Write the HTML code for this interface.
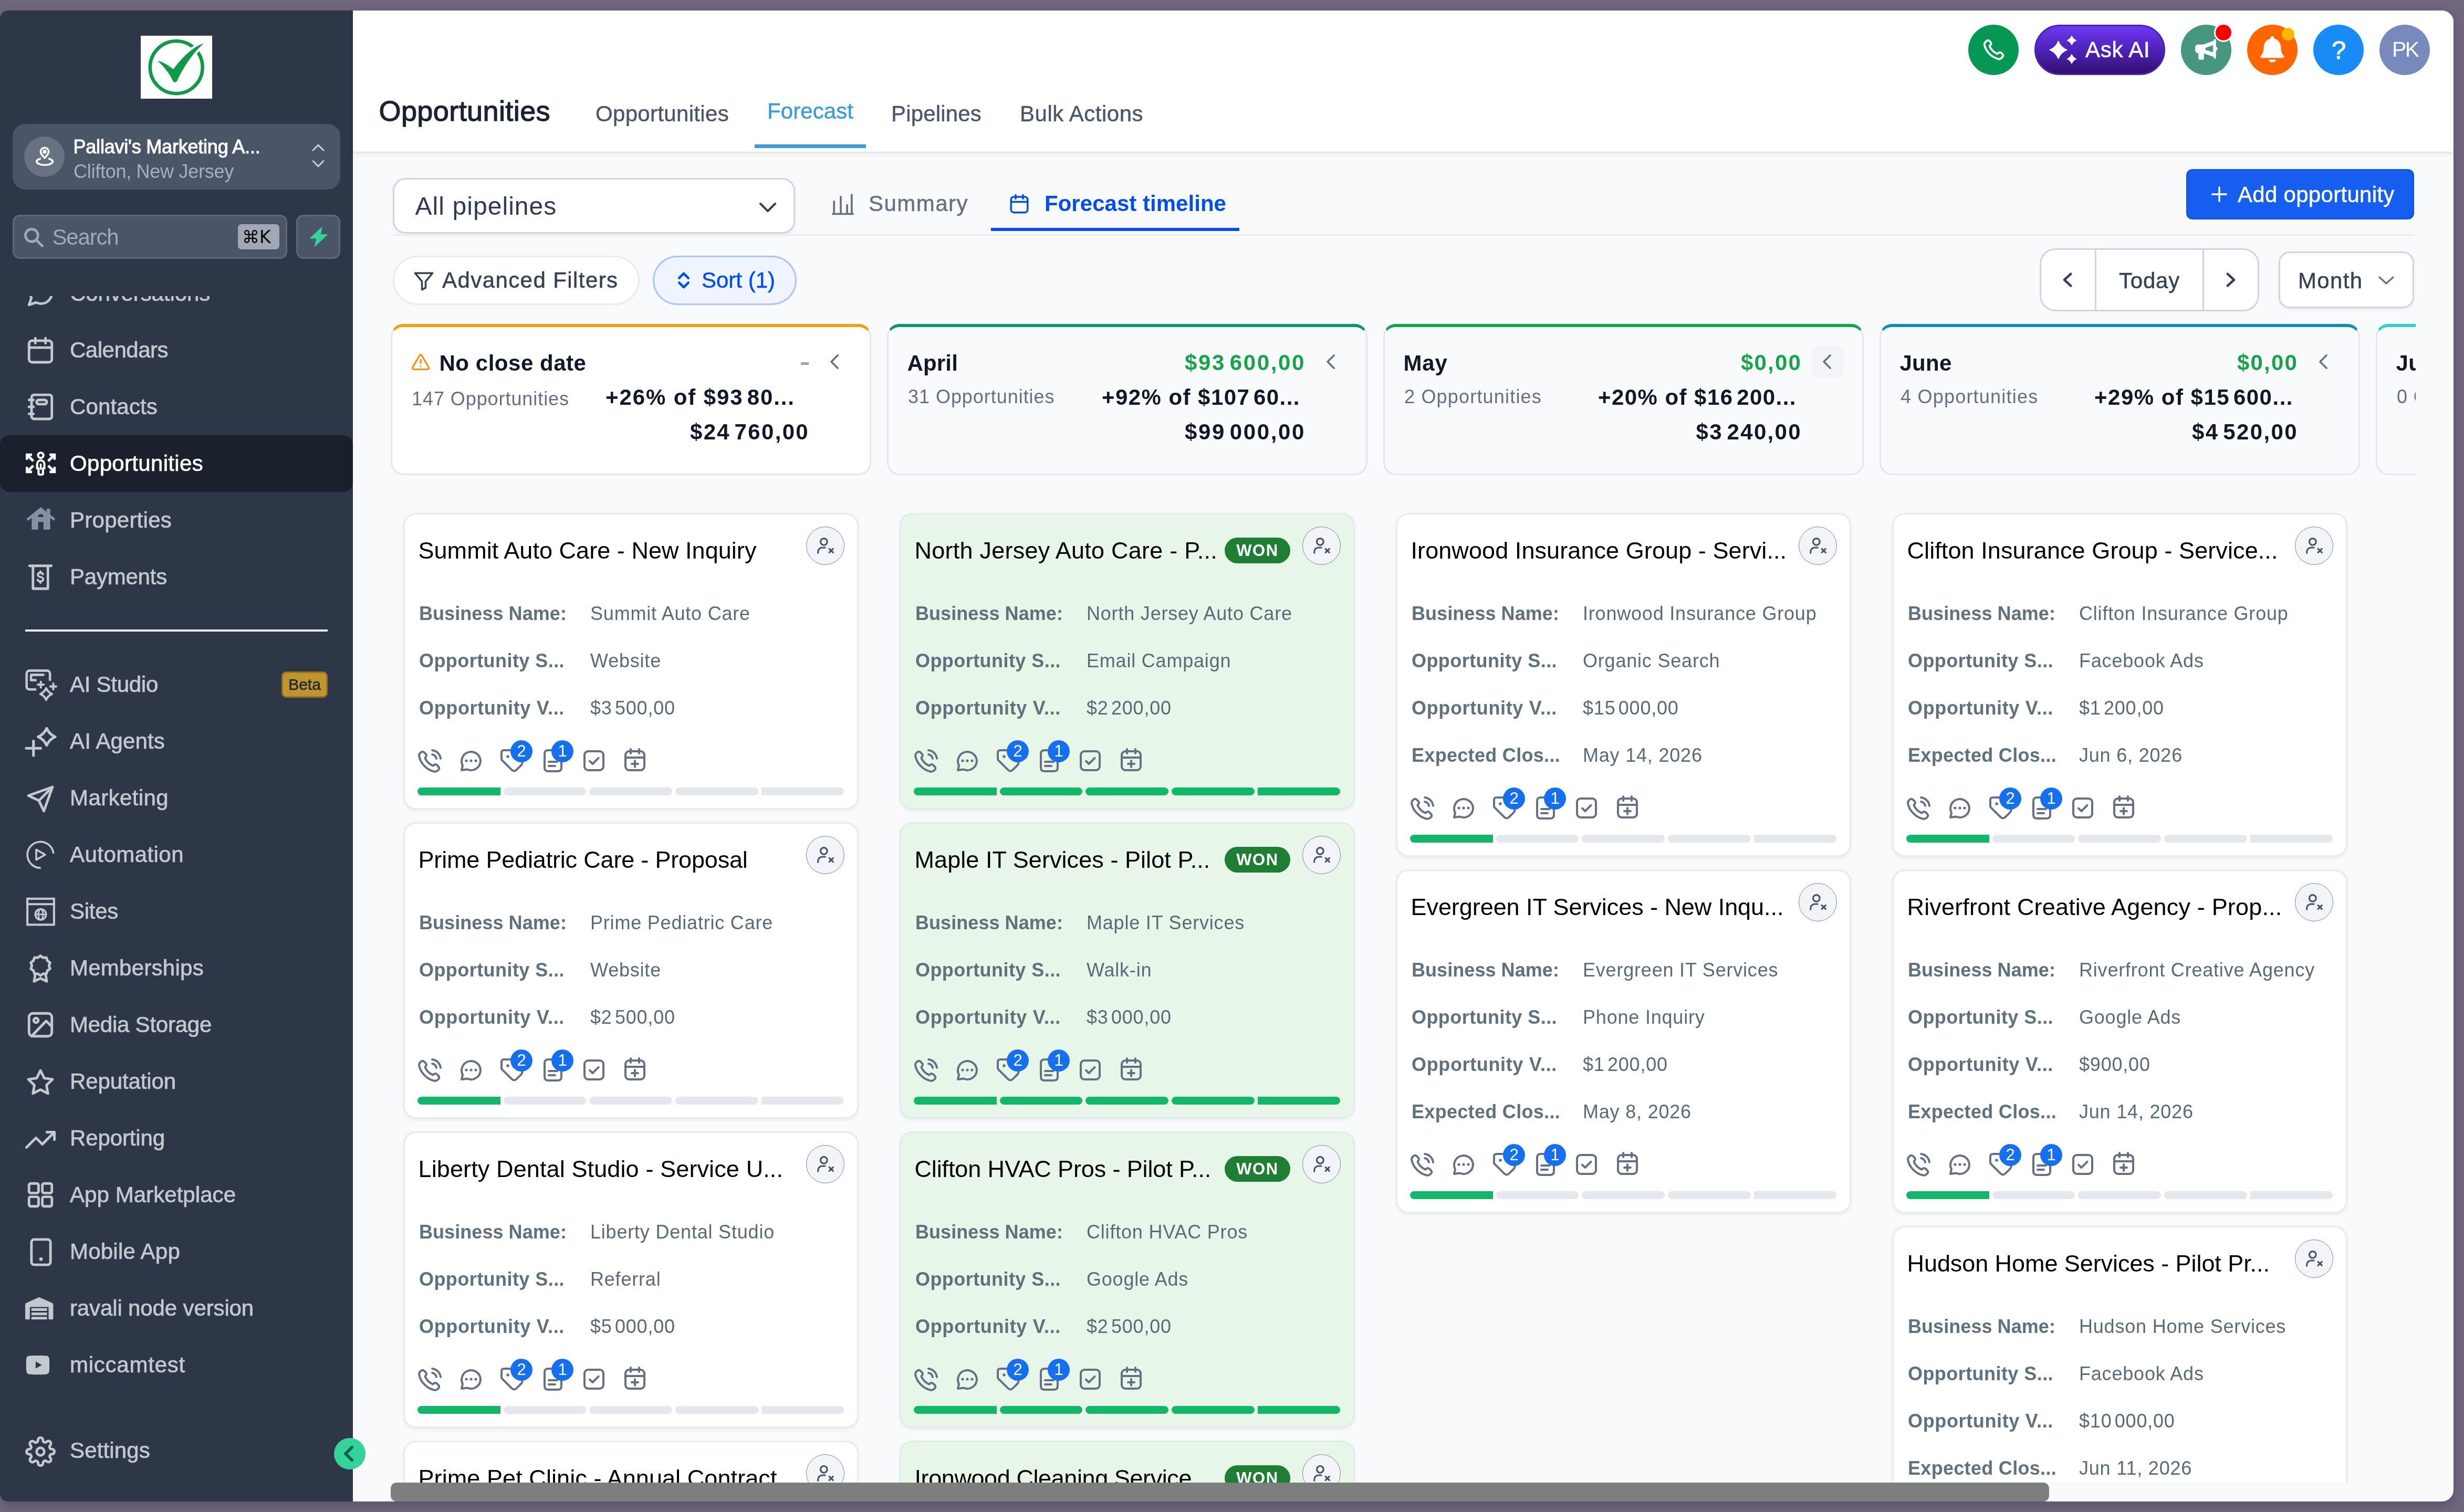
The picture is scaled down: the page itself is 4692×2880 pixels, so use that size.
<!DOCTYPE html>
<html lang="en"><head><meta charset="utf-8"><title>Opportunities - Forecast</title>
<style>
*{box-sizing:border-box;margin:0;padding:0}
html,body{width:4692px;height:2880px;overflow:hidden}
body{background:#70677d;font-family:"Liberation Sans",sans-serif;position:relative}
.win{will-change:transform;position:absolute;left:0;top:20px;width:4672px;height:2840px;overflow:hidden;border-radius:14px 22px 22px 14px;background:#f9fafb;box-shadow:0 6px 18px rgba(40,28,60,.30)}
.in{position:absolute;left:0;top:-20px;width:4672px;height:2880px}
.abs{position:absolute}
svg{display:block;width:100%;height:100%;overflow:visible}
.t{position:absolute;white-space:pre;line-height:1}
/* sidebar */
.sb{position:absolute;left:0;top:20px;width:672px;height:2840px;background:#2d3748}
.logo{position:absolute;left:268px;top:68px;width:136px;height:120px;background:#fff}
.loc{position:absolute;left:24px;top:236px;width:624px;height:125px;border-radius:24px;background:#4a5568}
.loc .av{position:absolute;left:22px;top:24px;width:77px;height:77px;border-radius:50%;background:#687283;color:#fff}
.srch{position:absolute;left:24px;top:409px;width:523px;height:84px;border-radius:14px;background:#4a5568;border:3px solid #5d6879}
.kbd{position:absolute;left:453px;top:427px;width:79px;height:48px;border-radius:7px;background:#a0a8b6}
.boltb{position:absolute;left:564px;top:409px;width:84px;height:84px;border-radius:14px;background:#4a5568;border:3px solid #5d6879}
.navclip{position:absolute;left:0;top:564px;width:672px;height:2140px;overflow:hidden}
.ni{position:absolute;left:0;width:672px;height:108px;color:#c4c8cf}
.ni.act{background:#1a202c;border-radius:18px;color:#fff}
.ni .ic{position:absolute;left:48px;top:25px;width:58px;height:58px}
.ni .ic.dim{color:#8491a3}
.ni .lb{position:absolute;left:133px;top:31px;font-size:44px;line-height:46px;white-space:pre;letter-spacing:-1.1px}
.beta{position:absolute;left:536px;width:88px;height:50px;border-radius:9px;background:#c0952f;border:3px solid #96731f;color:#1f2a3a;font-size:30px;line-height:44px;text-align:center;-webkit-text-stroke:.6px #1f2a3a}
/* header */
.hd{position:absolute;left:672px;top:20px;width:4000px;height:269px;background:#fff;box-shadow:0 3px 9px rgba(16,24,40,.10),0 1px 3px rgba(16,24,40,.06)}
.circ{position:absolute;top:47px;width:96px;height:96px;border-radius:50%;color:#fff}
.askai{position:absolute;left:3874px;top:47px;width:249px;height:96px;border-radius:48px;border:3px solid #4a22b5;background:linear-gradient(180deg,#6f37f2 0%,#5224c0 45%,#33106f 100%);color:#fff}
/* toolbar */
.sel{position:absolute;left:748px;top:339px;width:766px;height:106px;border-radius:24px;background:#fff;border:3px solid #d0d5dd;box-shadow:0 3px 6px rgba(16,24,40,.06)}
.addb{position:absolute;left:4163px;top:322px;width:434px;height:96px;border-radius:12px;background:#155eef;border:3px solid #0f55e0;color:#fff}
.pill{position:absolute;top:487px;height:94px;border-radius:47px;background:#fff;border:3px solid #eaecf0}
.grp{position:absolute;left:3884px;top:473px;width:418px;height:120px;border-radius:30px;background:#fff;border:3px solid #d0d5dd}
.mon{position:absolute;left:4339px;top:479px;width:258px;height:108px;border-radius:21px;background:#fff;border:3px solid #d0d5dd;box-shadow:0 3px 6px rgba(16,24,40,.05)}
/* board */
.board{position:absolute;left:744px;top:600px;width:3856px;height:2224px;overflow:hidden}
.col{position:absolute;top:17px;width:915px}
.ch{position:absolute;left:0;top:0;width:915px;height:288px;border-radius:24px;border:3px solid #e4e6eb;border-top-width:6px}
.ch.w{background:#fff}
.card{position:absolute;left:24px;width:867px;border-radius:24px;background:#fff;border:3px solid #e9ebef;box-shadow:0 3px 6px rgba(16,24,40,.06)}
.card.won{background:#e8f5e9;border-color:#e4ecea}
.card .ti{position:absolute;left:24px;top:60px;font-size:45px;line-height:50px;color:#000;white-space:pre}
.card .av{position:absolute;left:764px;top:23px;width:73px;height:73px;border-radius:50%;background:#f2f4f7;border:1.5px solid #7a8699;color:#475467}
.card .av svg{position:absolute;left:17px;top:16px;width:38px;height:38px}
.card .wonb{position:absolute;left:615px;top:43px;width:125px;height:49px;border-radius:25px;background:#1e7e34;color:#fff;font-size:31px;font-weight:700;line-height:50px;text-align:center;letter-spacing:1.5px}
.row{position:absolute;left:27px;height:50px;font-size:36px;line-height:50px;color:#5a6b78;white-space:pre}
.row b{position:absolute;left:0;top:0;font-weight:700;letter-spacing:-.1px}
.row span{position:absolute;left:325px;top:0;letter-spacing:.8px}
.ci{position:absolute;width:48px;height:48px;color:#667085}
.bdg{position:absolute;width:42px;height:42px;border-radius:50%;background:#1570ef;color:#fff;font-size:31px;line-height:42px;text-align:center}
.pb{position:absolute;left:23px;height:15px;width:813px}
.pb i{position:absolute;top:0;height:15px;width:157.6px;background:#e4e7ec;border-radius:8px}
.pb i.g{background:#12b76a}
.pb i:first-child{border-radius:8px 0 0 8px}
.pb i:last-child{border-radius:0 8px 8px 0}
.sbar{position:absolute;left:744px;top:2824px;width:3158px;height:36px;border-radius:11px;background:#7d7f7f}
.ns{font-size:.45em}
</style></head>
<body>
<div class="win"><div class="in">
<div class="sb"></div>
<div class="logo"><svg viewBox="0 0 136 120" style="width:136px;height:120px"><circle cx="67.7" cy="60.2" r="49.900" fill="none" stroke="#0f9a48" stroke-width="6.600"/><path d="M32.300 48.600C38 47 52 56 62.400 63.800C76 44 100 20 120 14.800C102 30 84 56 71 82C69.500 88 65 91 61.500 86.500C55 73 44 58 32.300 48.600z" fill="#0f9a48" stroke="#fff" stroke-width="9" paint-order="stroke" stroke-linejoin="round"/></svg></div>
<div class="loc"><div class="av"><div class="abs" style="left:16px;top:15px;width:46px;height:46px"><svg viewBox="0 0 24 24" fill="none" stroke="currentColor" stroke-width="1.9" stroke-linecap="round" stroke-linejoin="round"><path d="M12 13.500c2.200-2.300 4-4.100 4-6.200a4 4 0 0 0-8 0c0 2.100 1.800 3.900 4 6.200z"/><circle cx="12" cy="7.300" r="1" fill="currentColor"/><path d="M7.500 14.300C5.400 14.900 4 15.900 4 17c0 1.900 3.600 3.500 8 3.500s8-1.600 8-3.500c0-1.100-1.400-2.100-3.500-2.700"/></svg></div></div></div>
<div class="t" style="left:139.5px;top:261.5px;font-size:36px;color:#fff;font-weight:400;letter-spacing:-0.21px;-webkit-text-stroke:1px #fff">Pallavi's Marketing A...</div>
<div class="t" style="left:140px;top:308.5px;font-size:36px;color:#a7afbc;font-weight:400;letter-spacing:-0.27px;">Clifton, New Jersey</div>
<div class="abs" style="left:589px;top:265px;width:34px;height:34px;color:#cbd2dc"><svg viewBox="0 0 24 24" fill="none" stroke="currentColor" stroke-width="2" stroke-linecap="round" stroke-linejoin="round"><path d="M5 15l7-7 7 7"/></svg></div>
<div class="abs" style="left:589px;top:294px;width:34px;height:34px;color:#cbd2dc"><svg viewBox="0 0 24 24" fill="none" stroke="currentColor" stroke-width="2" stroke-linecap="round" stroke-linejoin="round"><path d="M5 9l7 7 7-7"/></svg></div>
<div class="srch"></div>
<div class="abs" style="left:42px;top:430px;width:44px;height:44px;color:#a0a9b8"><svg viewBox="0 0 24 24" fill="none" stroke="currentColor" stroke-width="2.6" stroke-linecap="round" stroke-linejoin="round"><circle cx="10" cy="10" r="6.500"/><path d="M15 15l6 6"/></svg></div>
<div class="t" style="left:99.5px;top:431.4px;font-size:42px;color:#a0a9b8;font-weight:400;letter-spacing:-1.18px;">Search</div>
<div class="kbd"></div>
<div class="t" style="left:461px;top:433px;font-size:36px;color:#000;font-weight:400;letter-spacing:0px;font-family:'DejaVu Sans','Liberation Sans',sans-serif;font-size:33px;top:435px">⌘K</div>
<div class="boltb"><div class="abs" style="left:20px;top:19px;width:40px;height:40px;color:#34d399"><svg viewBox="0 0 24 24" fill="currentColor" stroke="none"><path d="M15.500 1.200 2.600 13.600h7.200L7.600 22.800 21.400 9.600h-7.600z" stroke="currentColor" stroke-width="1" stroke-linejoin="round"/></svg></div></div>
<div class="navclip">
<div class="ni" style="top:-59px"><div class="ic" style="margin:0px 0 0 0px"><svg viewBox="0 0 24 24" fill="none" stroke="currentColor" stroke-width="2" stroke-linecap="round" stroke-linejoin="round"><path d="M21 11.5a8.4 8.4 0 0 1-8.5 8.5 8.6 8.6 0 0 1-3.9-.9L3 21l1.9-5.6A8.5 8.5 0 0 1 12.5 3 8.4 8.4 0 0 1 21 11.5z"/></svg></div><div class="t" style="left:133px;top:33.4px;font-size:42px;color:#c4c8cf;font-weight:400;letter-spacing:-0.11px;-webkit-text-stroke:.7px #c4c8cf">Conversations</div></div>
<div class="ni" style="top:49px"><div class="ic" style="margin:0px 0 0 0px"><svg viewBox="0 0 24 24" fill="none" stroke="currentColor" stroke-width="2" stroke-linecap="round" stroke-linejoin="round"><rect x="3" y="4.5" width="18" height="17" rx="2.5"/><path d="M8 2.5v4M16 2.5v4M3 10h18"/></svg></div><div class="t" style="left:133px;top:33.4px;font-size:42px;color:#c4c8cf;font-weight:400;letter-spacing:-0.49px;-webkit-text-stroke:.7px #c4c8cf">Calendars</div></div>
<div class="ni" style="top:157px"><div class="ic" style="margin:0px 0 0 0px"><svg viewBox="0 0 24 24" fill="none" stroke="currentColor" stroke-width="2" stroke-linecap="round" stroke-linejoin="round"><rect x="5" y="2.5" width="16" height="19" rx="2"/><rect x="9" y="6.5" width="8" height="3.4" rx="1.7"/><path d="M3 6.5h3.5M3 12h3.5M3 17.5h3.5"/></svg></div><div class="t" style="left:133px;top:33.4px;font-size:42px;color:#c4c8cf;font-weight:400;letter-spacing:0.16px;-webkit-text-stroke:.7px #c4c8cf">Contacts</div></div>
<div class="ni act" style="top:265px"><div class="ic" style="margin:0px 0 0 0px"><svg viewBox="0 0 24 24" fill="none" stroke="currentColor" stroke-width="2" stroke-linecap="round" stroke-linejoin="round"><circle cx="12.25" cy="5.5" r="2.1" stroke-width="1.7"/><path d="M9.4 12.3a2.85 2.85 0 0 1 5.7 0v3.5h-1.1v4.2a.7.7 0 0 1-.7.7h-2.1a.7.7 0 0 1-.7-.7v-4.2H9.4z" stroke-width="1.7"/><path d="M12.25 12.6v3.6" stroke-width="1.5"/><path d="M1.4 9V5h4M1.4 5l5 5M23.100 9V5h-4M23.100 5l-5 5M1.400 14.600v4h4M1.400 18.600l5-5M23.100 14.600v4h-4M23.100 18.600l-5-5" stroke-width="2" stroke-linecap="butt" stroke-linejoin="miter"/></svg></div><div class="t" style="left:133px;top:33.4px;font-size:42px;color:#fff;font-weight:400;letter-spacing:0.32px;-webkit-text-stroke:.7px #fff">Opportunities</div></div>
<div class="ni" style="top:373px"><div class="ic dim" style="margin:-1px 0 0 0px"><svg viewBox="0 0 24 24" fill="currentColor" stroke="none"><path d="M12.250 2.100 23.700 11.200l-1.200 1.600-2.800-2.200v9.200h-5.300v-6h-4.200v6H5.100v-9.200l-2.900 2.200-1.200-1.600z"/><path d="M16.900 3.300h2.800v6h-2.800z"/><path d="M10 9.800a2.250 2.250 0 0 1 4.500 0z" fill="#2d3748"/></svg></div><div class="t" style="left:133px;top:33.4px;font-size:42px;color:#c4c8cf;font-weight:400;letter-spacing:0.26px;-webkit-text-stroke:.7px #c4c8cf">Properties</div></div>
<div class="ni" style="top:481px"><div class="ic" style="margin:0px 0 0 0px"><svg viewBox="0 0 24 24" fill="none" stroke="currentColor" stroke-width="2" stroke-linecap="round" stroke-linejoin="round"><path d="M3.400 3.200h17.200"/><path d="M6.100 3.200v18h11.800v-18"/><path d="M14 9.900c-.3-.8-1-1.200-2-1.200-1.200 0-2 .6-2 1.600 0 2.300 4.200 1.100 4.200 3.500 0 1-.9 1.700-2.200 1.700-1.100 0-1.900-.4-2.200-1.300M12 7.500v1.200M12 15.500v1.200" stroke-width="1.600"/></svg></div><div class="t" style="left:133px;top:33.4px;font-size:42px;color:#c4c8cf;font-weight:400;letter-spacing:-0.22px;-webkit-text-stroke:.7px #c4c8cf">Payments</div></div>
<div class="ni" style="top:686px"><div class="ic" style="margin:0px 0 0 0px"><svg viewBox="0 0 24 24" fill="none" stroke="currentColor" stroke-width="1.9" stroke-linecap="round" stroke-linejoin="round"><path d="M8 15.800H3.400a2.300 2.300 0 0 1-2.300-2.300V3.300a2.300 2.300 0 0 1 2.300-2.300h13.800a2.300 2.300 0 0 1 2.300 2.300v5"/><path d="M14.300 4.300H4.600v4.200h3.600"/><path d="M12.300 9.700v4.600M10 12h4.600M22.100 11.200v4.600M19.800 13.500h4.600" stroke-width="1.700"/><path d="M16.5 14.799999999999999Q17.88 18.02 21.1 19.4Q17.88 20.779999999999998 16.5 24.0Q15.120000000000001 20.779999999999998 11.9 19.4Q15.120000000000001 18.02 16.5 14.799999999999999z" stroke-width="1.700"/></svg></div><div class="t" style="left:133px;top:33.4px;font-size:42px;color:#c4c8cf;font-weight:400;letter-spacing:-0.27px;-webkit-text-stroke:.7px #c4c8cf">AI Studio</div></div>
<div class="ni" style="top:794px"><div class="ic" style="margin:0px 0 0 0px"><svg viewBox="0 0 24 24" fill="none" stroke="currentColor" stroke-width="2.1" stroke-linecap="round" stroke-linejoin="round"><path d="M16.9 1.7999999999999998Q18.909999999999997 6.49 23.599999999999998 8.5Q18.909999999999997 10.51 16.9 15.2Q14.889999999999999 10.51 10.2 8.5Q14.889999999999999 6.49 16.9 1.7999999999999998z"/><path d="M6.500 11.800v11.400M.8 17.500h11.400"/></svg></div><div class="t" style="left:133px;top:33.4px;font-size:42px;color:#c4c8cf;font-weight:400;letter-spacing:0.13px;-webkit-text-stroke:.7px #c4c8cf">AI Agents</div></div>
<div class="ni" style="top:902px"><div class="ic" style="margin:2px 0 0 0px"><svg viewBox="0 0 24 24" fill="none" stroke="currentColor" stroke-width="2" stroke-linecap="round" stroke-linejoin="round"><path d="M21.500 2.500 10.800 13.200M21.500 2.500l-6.800 19-3.900-8.300L2.500 9.300z"/></svg></div><div class="t" style="left:133px;top:33.4px;font-size:42px;color:#c4c8cf;font-weight:400;letter-spacing:0.40px;-webkit-text-stroke:.7px #c4c8cf">Marketing</div></div>
<div class="ni" style="top:1010px"><div class="ic" style="margin:0px 0 0 0px"><svg viewBox="0 0 24 24" fill="none" stroke="currentColor" stroke-width="1.5" stroke-linecap="round" stroke-linejoin="round"><path d="M22.200 10.500A10.300 10.300 0 1 0 11.700 22.400"/><path d="M8.700 8v8l7-4z" stroke-width="1.500"/></svg></div><div class="t" style="left:133px;top:33.4px;font-size:42px;color:#c4c8cf;font-weight:400;letter-spacing:0.45px;-webkit-text-stroke:.7px #c4c8cf">Automation</div></div>
<div class="ni" style="top:1118px"><div class="ic" style="margin:0px 0 0 0px"><svg viewBox="0 0 24 24" fill="none" stroke="currentColor" stroke-width="1.7" stroke-linecap="round" stroke-linejoin="round"><rect x="1.700" y="2" width="21" height="20.500" stroke-linejoin="miter"/><path d="M1.700 6.300h21"/><circle cx="12.200" cy="14.400" r="4.200" stroke-width="1.500"/><ellipse cx="12.200" cy="14.400" rx="1.800" ry="4.200" stroke-width="1.200"/><path d="M8 14.400h8.400" stroke-width="1.200"/></svg></div><div class="t" style="left:133px;top:33.4px;font-size:42px;color:#c4c8cf;font-weight:400;letter-spacing:-0.28px;-webkit-text-stroke:.7px #c4c8cf">Sites</div></div>
<div class="ni" style="top:1226px"><div class="ic" style="margin:0px 0 0 0px"><svg viewBox="0 0 24 24" fill="none" stroke="currentColor" stroke-width="2" stroke-linecap="round" stroke-linejoin="round"><path d="M12 2.300l2.100 1.500 2.600-.1.800 2.500 2.100 1.500-.9 2.400.9 2.400-2.100 1.500-.8 2.500-2.600-.1-2.100 1.500-2.100-1.500-2.600.1-.8-2.500-2.100-1.500.9-2.400-.9-2.400 2.100-1.500.8-2.500 2.600.1z"/><path d="M8 16.500l-1 6 5-2.500 5 2.500-1-6"/></svg></div><div class="t" style="left:133px;top:33.4px;font-size:42px;color:#c4c8cf;font-weight:400;letter-spacing:0.26px;-webkit-text-stroke:.7px #c4c8cf">Memberships</div></div>
<div class="ni" style="top:1334px"><div class="ic" style="margin:0px 0 0 0px"><svg viewBox="0 0 24 24" fill="none" stroke="currentColor" stroke-width="2" stroke-linecap="round" stroke-linejoin="round"><rect x="3" y="3" width="18" height="18" rx="3"/><circle cx="8.500" cy="8.500" r="1.800"/><path d="M21 13.500l-4.500-4.500L5 21"/></svg></div><div class="t" style="left:133px;top:33.4px;font-size:42px;color:#c4c8cf;font-weight:400;letter-spacing:-0.24px;-webkit-text-stroke:.7px #c4c8cf">Media Storage</div></div>
<div class="ni" style="top:1442px"><div class="ic" style="margin:2px 0 0 0px"><svg viewBox="0 0 24 24" fill="none" stroke="currentColor" stroke-width="2" stroke-linecap="round" stroke-linejoin="round"><path d="M12 2.500l2.950 6 6.600.950-4.780 4.650 1.130 6.580L12 17.570l-5.900 3.110 1.130-6.580L2.450 9.450l6.600-.950z"/></svg></div><div class="t" style="left:133px;top:33.4px;font-size:42px;color:#c4c8cf;font-weight:400;letter-spacing:-0.12px;-webkit-text-stroke:.7px #c4c8cf">Reputation</div></div>
<div class="ni" style="top:1550px"><div class="ic" style="margin:3px 0 0 0px"><svg viewBox="0 0 24 24" fill="none" stroke="currentColor" stroke-width="2" stroke-linecap="round" stroke-linejoin="round"><path d="M23 6l-9.500 9.500-5-5L1 18"/><path d="M17 6h6v6"/></svg></div><div class="t" style="left:133px;top:33.4px;font-size:42px;color:#c4c8cf;font-weight:400;letter-spacing:-0.12px;-webkit-text-stroke:.7px #c4c8cf">Reporting</div></div>
<div class="ni" style="top:1658px"><div class="ic" style="margin:0px 0 0 0px"><svg viewBox="0 0 24 24" fill="none" stroke="currentColor" stroke-width="2" stroke-linecap="round" stroke-linejoin="round"><rect x="3" y="3" width="7.500" height="7.500" rx="1.300"/><rect x="13.500" y="3" width="7.500" height="7.500" rx="1.300"/><rect x="3" y="13.500" width="7.500" height="7.500" rx="1.300"/><rect x="13.500" y="13.500" width="7.500" height="7.500" rx="1.300"/></svg></div><div class="t" style="left:133px;top:33.4px;font-size:42px;color:#c4c8cf;font-weight:400;letter-spacing:0.06px;-webkit-text-stroke:.7px #c4c8cf">App Marketplace</div></div>
<div class="ni" style="top:1766px"><div class="ic" style="margin:1px 0 0 1px"><svg viewBox="0 0 24 24" fill="none" stroke="currentColor" stroke-width="2" stroke-linecap="round" stroke-linejoin="round"><rect x="4.500" y="2" width="15" height="20" rx="2.200"/><path d="M12 17.500h.01" stroke-width="2.800"/></svg></div><div class="t" style="left:133px;top:33.4px;font-size:42px;color:#c4c8cf;font-weight:400;letter-spacing:0.22px;-webkit-text-stroke:.7px #c4c8cf">Mobile App</div></div>
<div class="ni" style="top:1874px"><div class="ic" style="margin:1px 0 0 0px"><svg viewBox="0 0 24 24" fill="currentColor" stroke="none"><path transform="scale(.92 1)" d="M12 2.800 1 7.300c-.6.250-1 .8-1 1.500V19.500a.9.900 0 0 0 .9.900h2.200a.9.900 0 0 0 .9-.9V10.500h16V19.500a.9.900 0 0 0 .9.900h2.200a.9.900 0 0 0 .9-.9V8.800c0-.7-.4-1.250-1-1.500zM5.300 11.500h13.400v2.200H5.300zM5.300 14.900h13.400v2.200H5.300zM5.300 18.300h13.400v2.100H5.300z"/></svg></div><div class="t" style="left:133px;top:33.4px;font-size:42px;color:#c4c8cf;font-weight:400;letter-spacing:-0.13px;-webkit-text-stroke:.7px #c4c8cf">ravali node version</div></div>
<div class="ni" style="top:1982px"><div class="ic" style="margin:0px 0 0 -5px"><svg viewBox="0 0 24 24" fill="currentColor" stroke="none"><path d="M20.900 6.500c-.250-.900-.900-1.500-1.800-1.700C17.500 4.500 12 4.500 12 4.500s-5.500 0-7.100.300c-.900.200-1.550.800-1.800 1.700C2.800 8 2.800 12 2.800 12s0 4 .300 5.500c.250.900.900 1.500 1.800 1.700 1.600.300 7.100.300 7.100.300s5.500 0 7.100-.300c.900-.200 1.550-.800 1.800-1.700.300-1.500.300-5.500.300-5.500s0-4-.300-5.500zM10.300 14.800V9.200l4.900 2.800z"/></svg></div><div class="t" style="left:133px;top:33.4px;font-size:42px;color:#c4c8cf;font-weight:400;letter-spacing:0.76px;-webkit-text-stroke:.7px #c4c8cf">miccamtest</div></div>
<div class="beta" style="top:715px">Beta</div>
<div class="abs" style="left:48px;top:635px;width:576px;height:4px;background:#e8eaee"></div>
</div>
<div class="ni" style="top:2709px"><div class="ic" style="margin-top:2px"><svg viewBox="0 0 24 24" fill="none" stroke="currentColor" stroke-width="2" stroke-linecap="round" stroke-linejoin="round"><circle cx="12" cy="12" r="3"/><path d="M19.400 15a1.650 1.650 0 0 0 .330 1.820l.060.060a2 2 0 1 1-2.830 2.830l-.060-.060a1.650 1.650 0 0 0-1.820-.330 1.650 1.650 0 0 0-1 1.510V21a2 2 0 0 1-4 0v-.090A1.650 1.650 0 0 0 9 19.400a1.650 1.650 0 0 0-1.820.330l-.060.060a2 2 0 1 1-2.830-2.830l.060-.060a1.650 1.650 0 0 0 .330-1.820 1.650 1.650 0 0 0-1.510-1H3a2 2 0 0 1 0-4h.090A1.650 1.650 0 0 0 4.600 9a1.650 1.650 0 0 0-.330-1.820l-.060-.060a2 2 0 1 1 2.830-2.830l.060.060a1.650 1.650 0 0 0 1.820.330H9a1.650 1.650 0 0 0 1-1.510V3a2 2 0 0 1 4 0v.090a1.650 1.650 0 0 0 1 1.510 1.650 1.650 0 0 0 1.820-.330l.060-.060a2 2 0 1 1 2.830 2.830l-.060.060a1.650 1.650 0 0 0-.330 1.820V9a1.650 1.650 0 0 0 1.510 1H21a2 2 0 0 1 0 4h-.090a1.650 1.650 0 0 0-1.510 1z"/></svg></div><div class="t" style="left:133px;top:33.4px;font-size:42px;color:#c4c8cf;font-weight:400;letter-spacing:0.15px;-webkit-text-stroke:.7px #c4c8cf">Settings</div></div>
<div class="abs" style="left:636px;top:2739px;width:60px;height:60px;border-radius:50%;background:#34d399;color:#065f46;z-index:5"><div class="abs" style="left:8px;top:9px;width:42px;height:42px"><svg viewBox="0 0 24 24" fill="none" stroke="currentColor" stroke-width="3.200" stroke-linecap="round" stroke-linejoin="round"><path d="M15 5l-7 7 7 7"/></svg></div></div>
<div class="hd"></div>
<div class="t" style="left:721.5px;top:184.3px;font-size:54px;color:#1b2333;font-weight:400;letter-spacing:0.41px;-webkit-text-stroke:1.3px #1b2333">Opportunities</div>
<div class="t" style="left:1134px;top:196.4px;font-size:42px;color:#4a5567;font-weight:400;letter-spacing:0.32px;-webkit-text-stroke:.4px #4a5567">Opportunities</div>
<div class="t" style="left:1461px;top:191.4px;font-size:42px;color:#3a9bd9;font-weight:400;letter-spacing:0.08px;-webkit-text-stroke:.4px #3a9bd9">Forecast</div>
<div class="t" style="left:1697px;top:196.4px;font-size:42px;color:#4a5567;font-weight:400;letter-spacing:0.17px;-webkit-text-stroke:.4px #4a5567">Pipelines</div>
<div class="t" style="left:1942px;top:196.4px;font-size:42px;color:#4a5567;font-weight:400;letter-spacing:0.52px;-webkit-text-stroke:.4px #4a5567">Bulk Actions</div>
<div class="abs" style="left:1437px;top:275px;width:212px;height:7px;background:#3a9bd9"></div>
<div class="circ" style="left:3748px;background:#059855"><div class="abs" style="left:25px;top:25px;width:46px;height:46px;color:#fff;"><svg viewBox="0 0 24 24" fill="none" stroke="currentColor" stroke-width="2" stroke-linecap="round" stroke-linejoin="round"><path d="M8.380 8.850a14.600 14.600 0 0 0 2.850 4.010 14.600 14.600 0 0 0 4.010 2.850c.120.060.190.090.270.110.280.080.620.020.860-.150.070-.050.120-.100.240-.220.350-.350.520-.520.700-.640a2 2 0 0 1 2.180 0c.180.120.350.290.700.640l.200.200c.530.530.800.800.940 1.080a2 2 0 0 1 0 1.810c-.140.280-.410.550-.940 1.080l-.160.160c-.530.530-.800.800-1.160 1-.400.220-1.020.380-1.480.380-.410 0-.700-.080-1.260-.240a19 19 0 0 1-8.280-4.870 19 19 0 0 1-4.870-8.280C3.080 7.220 3 6.930 3 6.520c0-.460.160-1.080.380-1.480.200-.360.470-.630 1-1.160l.160-.160c.530-.530.800-.800 1.080-.940a2 2 0 0 1 1.810 0c.280.140.550.410 1.080.940l.200.200c.350.350.520.520.640.700a2 2 0 0 1 0 2.180c-.120.180-.290.350-.640.700-.120.120-.170.170-.220.240-.170.240-.230.580-.150.860.020.080.050.150.110.270z"/></svg></div></div>
<div class="askai"><div class="abs" style="left:19px;top:16px;width:58px;height:58px;color:#fff;"><svg viewBox="0 0 24 24" fill="currentColor" stroke="none"><path stroke="currentColor" stroke-width="0.6" stroke-linejoin="round" d="M9.72 5.17Q11.63 10.09 16.55 12.0Q11.63 13.91 9.72 18.83Q7.81 13.91 2.8900000000000006 12.0Q7.81 10.09 9.72 5.17zM20.28 1.0699999999999998Q21.25 3.58 23.76 4.55Q21.25 5.52 20.28 8.03Q19.31 5.52 16.8 4.55Q19.31 3.58 20.28 1.0699999999999998zM20.28 15.64Q21.27 18.17 23.8 19.16Q21.27 20.15 20.28 22.68Q19.29 20.15 16.76 19.16Q19.29 18.17 20.28 15.64z"/></svg></div></div>
<div class="t" style="left:3971px;top:74.4px;font-size:42px;color:#fff;font-weight:400;letter-spacing:0.74px;-webkit-text-stroke:.6px #fff">Ask AI</div>
<div class="circ" style="left:4153px;background:#45977f"><div class="abs" style="left:23px;top:22px;width:50px;height:50px;color:#fff;"><svg viewBox="0 0 24 24" fill="currentColor" stroke="none"><path d="M20 2.500c-.550 0-1 .450-1 1v.600L9.500 7.500H4.500A2.500 2.500 0 0 0 2 10v3a2.500 2.500 0 0 0 2.500 2.500H5V20a1.500 1.500 0 0 0 1.500 1.500h2A1.500 1.500 0 0 0 10 20v-4.300l9 3.200v.600a1 1 0 0 0 2 0v-6.100a2 2 0 0 0 0-3.800V3.500c0-.550-.450-1-1-1zM18.300 8.200v6.600l-7-2.500v-1.600z" fill-rule="evenodd"/></svg></div></div>
<div class="abs" style="left:4216px;top:44px;width:36px;height:36px;border-radius:50%;background:#ff0000;border:3px solid #fff"></div>
<div class="circ" style="left:4279px;background:#ff6600"><div class="abs" style="left:18px;top:17px;width:60px;height:60px;color:#fff;"><svg viewBox="0 0 24 24" fill="currentColor" stroke="none"><path d="M12 2a1.300 1.300 0 0 0-1.300 1.300v.500A6.500 6.500 0 0 0 5.500 10.200c0 3.300-.900 5.300-2.300 6.800-.500.550-.100 1.500.700 1.500h16.200c.800 0 1.200-.950.700-1.500-1.400-1.500-2.300-3.500-2.300-6.800a6.500 6.500 0 0 0-5.200-6.400v-.500A1.300 1.300 0 0 0 12 2zM9.200 19.800a2.900 2.900 0 0 0 5.600 0z"/></svg></div></div>
<div class="abs" style="left:4345px;top:53px;width:24px;height:24px;border-radius:50%;background:#ffb800"></div>
<div class="circ" style="left:4405px;background:#188bf6"></div>
<div class="t" style="left:4440px;top:71.0px;font-size:49px;color:#fff;font-weight:400;letter-spacing:0px;-webkit-text-stroke:1.1px #fff">?</div>
<div class="circ" style="left:4531px;background:#7789bd"></div>
<div class="t" style="left:4555px;top:74.3px;font-size:41px;color:#fff;font-weight:400;letter-spacing:-2.5px;">PK</div>
<div class="sel"></div>
<div class="t" style="left:790.5px;top:369.4px;font-size:48px;color:#2f3b52;font-weight:400;letter-spacing:1.06px;">All pipelines</div>
<div class="abs" style="left:1438px;top:370px;width:48px;height:48px;color:#344054;"><svg viewBox="0 0 24 24" fill="none" stroke="currentColor" stroke-width="2" stroke-linecap="round" stroke-linejoin="round"><path d="M5 9l7 7 7-7"/></svg></div>
<div class="abs" style="left:1584px;top:369px;width:42px;height:42px;color:#667085;"><svg viewBox="0 0 24 24" fill="none" stroke="currentColor" stroke-width="2.1" stroke-linecap="round" stroke-linejoin="round"><path d="M1 22h22M2.400 22V8.400M9.700 22V3.400M16.600 22V12.300M21.600 22V1.200"/></svg></div>
<div class="t" style="left:1654px;top:367.4px;font-size:42px;color:#667085;font-weight:400;letter-spacing:1.47px;-webkit-text-stroke:.5px #667085">Summary</div>
<div class="abs" style="left:1920px;top:367px;width:42px;height:42px;color:#004eeb;"><svg viewBox="0 0 24 24" fill="none" stroke="currentColor" stroke-width="2" stroke-linecap="round" stroke-linejoin="round"><rect x="3" y="4.500" width="18" height="17" rx="3"/><path d="M3 10h18M8 2.500v4M16 2.500v4"/></svg></div>
<div class="t" style="left:1989px;top:367.4px;font-size:42px;color:#004eeb;font-weight:700;letter-spacing:0.03px;">Forecast timeline</div>
<div class="abs" style="left:748px;top:446px;width:3849px;height:3px;background:#eaecf0"></div>
<div class="abs" style="left:1887px;top:434px;width:473px;height:6px;background:#004eeb"></div>
<div class="addb"><div class="abs" style="left:40px;top:25px;width:40px;height:40px;color:#fff;"><svg viewBox="0 0 24 24" fill="none" stroke="currentColor" stroke-width="2" stroke-linecap="round" stroke-linejoin="round"><path d="M12 4v16M4 12h16"/></svg></div></div>
<div class="t" style="left:4261px;top:350.4px;font-size:42px;color:#fff;font-weight:400;letter-spacing:0.29px;-webkit-text-stroke:.5px #fff">Add opportunity</div>
<div class="pill" style="left:748px;width:470px"></div>
<div class="abs" style="left:786px;top:514px;width:42px;height:42px;color:#344054;"><svg viewBox="0 0 24 24" fill="none" stroke="currentColor" stroke-width="2" stroke-linecap="round" stroke-linejoin="round"><path d="M2.500 3.500h19l-7.500 9.200v6.800l-4 2v-8.800z"/></svg></div>
<div class="t" style="left:842px;top:513.4px;font-size:42px;color:#344054;font-weight:400;letter-spacing:1.42px;-webkit-text-stroke:.5px #344054">Advanced Filters</div>
<div class="pill" style="left:1243px;width:274px;background:#eff4ff;border-color:#a9c5fb"></div>
<div class="abs" style="left:1281px;top:513px;width:42px;height:42px;color:#004eeb;"><svg viewBox="0 0 24 24" fill="none" stroke="currentColor" stroke-width="2.6" stroke-linecap="round" stroke-linejoin="round"><path d="M7 9.500l5-5 5 5M7 14.500l5 5 5-5"/></svg></div>
<div class="t" style="left:1336px;top:513.4px;font-size:42px;color:#004eeb;font-weight:400;letter-spacing:-0.00px;-webkit-text-stroke:.5px #004eeb">Sort (1)</div>
<div class="grp"><div class="abs" style="left:102px;top:0;width:3px;height:114px;background:#d0d5dd"></div><div class="abs" style="left:307px;top:0;width:3px;height:114px;background:#d0d5dd"></div></div>
<div class="abs" style="left:3917px;top:512px;width:42px;height:42px;color:#344054;"><svg viewBox="0 0 24 24" fill="none" stroke="currentColor" stroke-width="2.6" stroke-linecap="round" stroke-linejoin="round"><path d="M15 5.500l-7 6.500 7 6.500"/></svg></div>
<div class="t" style="left:4035px;top:514.4px;font-size:42px;color:#344054;font-weight:400;letter-spacing:0.78px;-webkit-text-stroke:.4px #344054">Today</div>
<div class="abs" style="left:4226px;top:512px;width:42px;height:42px;color:#344054;"><svg viewBox="0 0 24 24" fill="none" stroke="currentColor" stroke-width="2.6" stroke-linecap="round" stroke-linejoin="round"><path d="M9 5.500l7 6.500-7 6.500"/></svg></div>
<div class="mon"></div>
<div class="t" style="left:4376px;top:514.4px;font-size:42px;color:#344054;font-weight:400;letter-spacing:1.37px;-webkit-text-stroke:.4px #344054">Month</div>
<div class="abs" style="left:4520px;top:509px;width:48px;height:48px;color:#667085;"><svg viewBox="0 0 24 24" fill="none" stroke="currentColor" stroke-width="1.6" stroke-linecap="round" stroke-linejoin="round"><path d="M5.500 9.500l6.500 6 6.500-6"/></svg></div>
<div class="board">
<div class="col" style="left:0px">
<div class="ch w" style="border-top-color:#f59e0b"></div>
<div class="abs" style="left:38px;top:54px;width:38px;height:38px;color:#f79009;"><svg viewBox="0 0 24 24" fill="none" stroke="currentColor" stroke-width="2" stroke-linecap="round" stroke-linejoin="round"><path d="M12 9v4M12 17h.01M10.600 3.900 2.400 18a1.600 1.600 0 0 0 1.400 2.500h16.400a1.600 1.600 0 0 0 1.400-2.500L13.400 3.900a1.600 1.600 0 0 0-2.800 0z"/></svg></div>
<div class="t" style="left:92.5px;top:53.9px;font-size:42px;color:#101828;font-weight:700;letter-spacing:0.53px;">No close date</div>
<div class="t" style="left:40px;top:124.5px;font-size:36px;color:#667085;font-weight:400;letter-spacing:0.93px;">147 Opportunities</div>
<div class="abs" style="left:781px;top:73px;width:15px;height:5px;background:#98a2b3"></div>
<div class="t" style="left:409px;top:119.0px;font-size:42px;color:#101828;font-weight:700;letter-spacing:1.90px;">+26% of $93<span class="ns"> </span>80...</div>
<div class="t" style="left:auto;right:118px;top:185.4px;font-size:42px;color:#101828;font-weight:700;letter-spacing:2.32px;">$24<span class="ns"> </span>760,00</div>
<div class="abs" style="left:825px;top:51px;width:42px;height:42px;color:#667085;"><svg viewBox="0 0 24 24" fill="none" stroke="currentColor" stroke-width="2" stroke-linecap="round" stroke-linejoin="round"><path d="M15 5l-7 7 7 7"/></svg></div>
<div class="card" style="top:360px;height:565px">
<div class="t" style="left:25.5px;top:45.9px;font-size:45px;color:#000;font-weight:400;letter-spacing:0.04px;">Summit Auto Care - New Inquiry</div>
<div class="av" style="left:764px;top:23px"><svg viewBox="0 0 24 24" fill="none" stroke="currentColor" stroke-width="2" stroke-linecap="round" stroke-linejoin="round"><circle cx="10" cy="7.500" r="4"/><path d="M3 21v-1.500a5 5 0 0 1 5-5h3.500M16.500 16l4.500 4.500M21 16l-4.500 4.500"/></svg></div>
<div class="t" style="left:27px;top:171.0px;font-size:36px;color:#5f717d;font-weight:700;letter-spacing:0.06px;">Business Name:</div>
<div class="t" style="left:353px;top:171.0px;font-size:36px;color:#5a6b78;font-weight:400;letter-spacing:0.8px;">Summit Auto Care</div>
<div class="t" style="left:27px;top:261.0px;font-size:36px;color:#5f717d;font-weight:700;letter-spacing:0.44px;">Opportunity S...</div>
<div class="t" style="left:353px;top:261.0px;font-size:36px;color:#5a6b78;font-weight:400;letter-spacing:0.8px;">Website</div>
<div class="t" style="left:27px;top:351.0px;font-size:36px;color:#5f717d;font-weight:700;letter-spacing:0.64px;">Opportunity V...</div>
<div class="t" style="left:353px;top:351.0px;font-size:36px;color:#5a6b78;font-weight:400;letter-spacing:0.8px;">$3<span class="ns"> </span>500,00</div>
<div class="ci" style="left:24px;top:445px"><svg viewBox="0 0 24 24" fill="none" stroke="currentColor" stroke-width="2" stroke-linecap="round" stroke-linejoin="round"><path d="M14.050 6A5 5 0 0 1 18 9.950M14.050 2A9 9 0 0 1 22 9.940M10.230 13.860a14.600 14.600 0 0 1-2.850-4.010 1 1 0 0 1 .200-1.140l.300-.300c.830-.830.830-2 0-2.830L6.200 3.900a2 2 0 0 0-2.830 0l-.760.760c-.860.860-1.230 2.070-1 3.260.570 2.950 2.300 6.390 5.170 9.260s6.310 4.600 9.260 5.170c1.190.230 2.400-.140 3.260-1l.760-.760a2 2 0 0 0 0-2.830l-1.680-1.680a2 2 0 0 0-2.830 0l-.300.300a1 1 0 0 1-1.140.200 14.600 14.600 0 0 1-3.880-2.720z"/></svg></div>
<div class="ci" style="left:102px;top:445px"><svg viewBox="0 0 24 24" fill="none" stroke="currentColor" stroke-width="2" stroke-linecap="round" stroke-linejoin="round"><path d="M21 12a9 9 0 0 1-12.600 8.250L3 21l1-4.400A9 9 0 1 1 21 12z"/><path d="M7.500 12h.01M12 12h.01M16.500 12h.01" stroke-width="2.600"/></svg></div>
<div class="ci" style="left:180px;top:445px"><svg viewBox="0 0 24 24" fill="none" stroke="currentColor" stroke-width="2" stroke-linecap="round" stroke-linejoin="round"><path d="M8 8h.01" stroke-width="2.800"/><path d="M2 5.200v4.470c0 .490 0 .730.060.960.050.200.130.400.240.580.120.200.300.370.640.720l7.670 7.670c1.190 1.190 1.780 1.780 2.470 2 .600.200 1.250.200 1.850 0 .690-.220 1.280-.810 2.470-2l2.200-2.200c1.190-1.190 1.780-1.780 2-2.470.200-.600.200-1.250 0-1.850-.220-.690-.810-1.280-2-2.470l-7.670-7.670c-.350-.350-.520-.520-.720-.640a2 2 0 0 0-.580-.240C10.400 2 10.160 2 9.670 2H5.200c-1.120 0-1.680 0-2.110.220a2 2 0 0 0-.870.870C2 3.520 2 4.080 2 5.200z"/></svg></div>
<div class="ci" style="left:258px;top:445px"><svg viewBox="0 0 24 24" fill="none" stroke="currentColor" stroke-width="2" stroke-linecap="round" stroke-linejoin="round"><path d="M14 2.270V6.400c0 .560 0 .840.110 1.050.100.190.250.340.440.440.210.110.490.110 1.050.110h4.130M14 17H8M16 13H8M20 9.990V17.200c0 1.680 0 2.520-.330 3.160a3 3 0 0 1-1.310 1.310c-.640.330-1.480.330-3.160.330H8.800c-1.680 0-2.520 0-3.160-.330a3 3 0 0 1-1.310-1.310C4 19.720 4 18.880 4 17.200V6.800c0-1.680 0-2.520.330-3.160a3 3 0 0 1 1.310-1.310C6.280 2 7.120 2 8.800 2h3.210c.730 0 1.100 0 1.450.080.310.070.600.200.870.360.300.190.560.450 1.080.960l3.190 3.190c.520.520.780.780.960 1.080.170.270.290.560.360.870.080.350.080.710.080 1.450z"/></svg></div>
<div class="ci" style="left:336px;top:445px"><svg viewBox="0 0 24 24" fill="none" stroke="currentColor" stroke-width="2" stroke-linecap="round" stroke-linejoin="round"><path d="M8 12.300l2.700 2.700L16.300 9.400"/><rect x="3" y="3" width="18" height="18" rx="3.500"/></svg></div>
<div class="ci" style="left:414px;top:443px"><svg viewBox="0 0 24 24" fill="none" stroke="currentColor" stroke-width="2" stroke-linecap="round" stroke-linejoin="round"><rect x="3" y="4" width="18" height="18" rx="3.500"/><path d="M3 10h18M8 2v4M16 2v4M12 13v6M9 16h6"/></svg></div>
<div class="bdg" style="left:201px;top:430px">2</div>
<div class="bdg" style="left:279px;top:430px">1</div>
<div class="pb" style="left:24px;top:520px"><i class="g" style="left:0.0px"></i><i class="" style="left:163.7px"></i><i class="" style="left:327.4px"></i><i class="" style="left:491.1px"></i><i class="" style="left:654.8px"></i></div>
</div>
<div class="card" style="top:949px;height:565px">
<div class="t" style="left:25.5px;top:45.9px;font-size:45px;color:#000;font-weight:400;letter-spacing:-0.18px;">Prime Pediatric Care - Proposal</div>
<div class="av" style="left:764px;top:23px"><svg viewBox="0 0 24 24" fill="none" stroke="currentColor" stroke-width="2" stroke-linecap="round" stroke-linejoin="round"><circle cx="10" cy="7.500" r="4"/><path d="M3 21v-1.500a5 5 0 0 1 5-5h3.500M16.500 16l4.500 4.500M21 16l-4.500 4.500"/></svg></div>
<div class="t" style="left:27px;top:171.0px;font-size:36px;color:#5f717d;font-weight:700;letter-spacing:0.06px;">Business Name:</div>
<div class="t" style="left:353px;top:171.0px;font-size:36px;color:#5a6b78;font-weight:400;letter-spacing:0.8px;">Prime Pediatric Care</div>
<div class="t" style="left:27px;top:261.0px;font-size:36px;color:#5f717d;font-weight:700;letter-spacing:0.44px;">Opportunity S...</div>
<div class="t" style="left:353px;top:261.0px;font-size:36px;color:#5a6b78;font-weight:400;letter-spacing:0.8px;">Website</div>
<div class="t" style="left:27px;top:351.0px;font-size:36px;color:#5f717d;font-weight:700;letter-spacing:0.64px;">Opportunity V...</div>
<div class="t" style="left:353px;top:351.0px;font-size:36px;color:#5a6b78;font-weight:400;letter-spacing:0.8px;">$2<span class="ns"> </span>500,00</div>
<div class="ci" style="left:24px;top:445px"><svg viewBox="0 0 24 24" fill="none" stroke="currentColor" stroke-width="2" stroke-linecap="round" stroke-linejoin="round"><path d="M14.050 6A5 5 0 0 1 18 9.950M14.050 2A9 9 0 0 1 22 9.940M10.230 13.860a14.600 14.600 0 0 1-2.850-4.010 1 1 0 0 1 .200-1.140l.300-.300c.830-.830.830-2 0-2.830L6.200 3.900a2 2 0 0 0-2.830 0l-.760.760c-.860.860-1.230 2.070-1 3.260.570 2.950 2.300 6.390 5.170 9.260s6.310 4.600 9.260 5.170c1.190.230 2.400-.140 3.260-1l.760-.760a2 2 0 0 0 0-2.830l-1.680-1.680a2 2 0 0 0-2.830 0l-.300.300a1 1 0 0 1-1.140.200 14.600 14.600 0 0 1-3.880-2.720z"/></svg></div>
<div class="ci" style="left:102px;top:445px"><svg viewBox="0 0 24 24" fill="none" stroke="currentColor" stroke-width="2" stroke-linecap="round" stroke-linejoin="round"><path d="M21 12a9 9 0 0 1-12.600 8.250L3 21l1-4.400A9 9 0 1 1 21 12z"/><path d="M7.500 12h.01M12 12h.01M16.500 12h.01" stroke-width="2.600"/></svg></div>
<div class="ci" style="left:180px;top:445px"><svg viewBox="0 0 24 24" fill="none" stroke="currentColor" stroke-width="2" stroke-linecap="round" stroke-linejoin="round"><path d="M8 8h.01" stroke-width="2.800"/><path d="M2 5.200v4.470c0 .490 0 .730.060.960.050.200.130.400.240.580.120.200.300.370.640.720l7.670 7.670c1.190 1.190 1.780 1.780 2.470 2 .600.200 1.250.200 1.850 0 .690-.220 1.280-.810 2.470-2l2.200-2.200c1.190-1.190 1.780-1.780 2-2.470.200-.600.200-1.250 0-1.850-.220-.690-.810-1.280-2-2.470l-7.670-7.670c-.350-.350-.520-.520-.720-.640a2 2 0 0 0-.580-.240C10.400 2 10.160 2 9.670 2H5.200c-1.120 0-1.680 0-2.110.220a2 2 0 0 0-.870.870C2 3.520 2 4.080 2 5.200z"/></svg></div>
<div class="ci" style="left:258px;top:445px"><svg viewBox="0 0 24 24" fill="none" stroke="currentColor" stroke-width="2" stroke-linecap="round" stroke-linejoin="round"><path d="M14 2.270V6.400c0 .560 0 .840.110 1.050.100.190.250.340.440.440.210.110.490.110 1.050.110h4.130M14 17H8M16 13H8M20 9.990V17.200c0 1.680 0 2.520-.330 3.160a3 3 0 0 1-1.310 1.310c-.640.330-1.480.330-3.160.330H8.800c-1.680 0-2.520 0-3.160-.330a3 3 0 0 1-1.310-1.310C4 19.720 4 18.880 4 17.200V6.800c0-1.680 0-2.520.330-3.160a3 3 0 0 1 1.310-1.310C6.280 2 7.120 2 8.800 2h3.210c.730 0 1.100 0 1.450.080.310.070.600.200.870.360.300.190.560.450 1.080.960l3.190 3.190c.520.520.780.780.960 1.080.170.270.290.560.360.870.080.350.080.710.080 1.450z"/></svg></div>
<div class="ci" style="left:336px;top:445px"><svg viewBox="0 0 24 24" fill="none" stroke="currentColor" stroke-width="2" stroke-linecap="round" stroke-linejoin="round"><path d="M8 12.300l2.700 2.700L16.300 9.400"/><rect x="3" y="3" width="18" height="18" rx="3.500"/></svg></div>
<div class="ci" style="left:414px;top:443px"><svg viewBox="0 0 24 24" fill="none" stroke="currentColor" stroke-width="2" stroke-linecap="round" stroke-linejoin="round"><rect x="3" y="4" width="18" height="18" rx="3.500"/><path d="M3 10h18M8 2v4M16 2v4M12 13v6M9 16h6"/></svg></div>
<div class="bdg" style="left:201px;top:430px">2</div>
<div class="bdg" style="left:279px;top:430px">1</div>
<div class="pb" style="left:24px;top:520px"><i class="g" style="left:0.0px"></i><i class="" style="left:163.7px"></i><i class="" style="left:327.4px"></i><i class="" style="left:491.1px"></i><i class="" style="left:654.8px"></i></div>
</div>
<div class="card" style="top:1538px;height:565px">
<div class="t" style="left:25.5px;top:45.9px;font-size:45px;color:#000;font-weight:400;letter-spacing:0.12px;">Liberty Dental Studio - Service U...</div>
<div class="av" style="left:764px;top:23px"><svg viewBox="0 0 24 24" fill="none" stroke="currentColor" stroke-width="2" stroke-linecap="round" stroke-linejoin="round"><circle cx="10" cy="7.500" r="4"/><path d="M3 21v-1.500a5 5 0 0 1 5-5h3.500M16.500 16l4.500 4.500M21 16l-4.500 4.500"/></svg></div>
<div class="t" style="left:27px;top:171.0px;font-size:36px;color:#5f717d;font-weight:700;letter-spacing:0.06px;">Business Name:</div>
<div class="t" style="left:353px;top:171.0px;font-size:36px;color:#5a6b78;font-weight:400;letter-spacing:0.8px;">Liberty Dental Studio</div>
<div class="t" style="left:27px;top:261.0px;font-size:36px;color:#5f717d;font-weight:700;letter-spacing:0.44px;">Opportunity S...</div>
<div class="t" style="left:353px;top:261.0px;font-size:36px;color:#5a6b78;font-weight:400;letter-spacing:0.8px;">Referral</div>
<div class="t" style="left:27px;top:351.0px;font-size:36px;color:#5f717d;font-weight:700;letter-spacing:0.64px;">Opportunity V...</div>
<div class="t" style="left:353px;top:351.0px;font-size:36px;color:#5a6b78;font-weight:400;letter-spacing:0.8px;">$5<span class="ns"> </span>000,00</div>
<div class="ci" style="left:24px;top:445px"><svg viewBox="0 0 24 24" fill="none" stroke="currentColor" stroke-width="2" stroke-linecap="round" stroke-linejoin="round"><path d="M14.050 6A5 5 0 0 1 18 9.950M14.050 2A9 9 0 0 1 22 9.940M10.230 13.860a14.600 14.600 0 0 1-2.850-4.010 1 1 0 0 1 .200-1.140l.300-.300c.830-.830.830-2 0-2.830L6.200 3.900a2 2 0 0 0-2.830 0l-.760.760c-.860.860-1.230 2.070-1 3.260.570 2.950 2.300 6.390 5.170 9.260s6.310 4.600 9.260 5.170c1.190.230 2.400-.140 3.260-1l.760-.760a2 2 0 0 0 0-2.830l-1.680-1.680a2 2 0 0 0-2.830 0l-.300.300a1 1 0 0 1-1.140.200 14.600 14.600 0 0 1-3.880-2.720z"/></svg></div>
<div class="ci" style="left:102px;top:445px"><svg viewBox="0 0 24 24" fill="none" stroke="currentColor" stroke-width="2" stroke-linecap="round" stroke-linejoin="round"><path d="M21 12a9 9 0 0 1-12.600 8.250L3 21l1-4.400A9 9 0 1 1 21 12z"/><path d="M7.500 12h.01M12 12h.01M16.500 12h.01" stroke-width="2.600"/></svg></div>
<div class="ci" style="left:180px;top:445px"><svg viewBox="0 0 24 24" fill="none" stroke="currentColor" stroke-width="2" stroke-linecap="round" stroke-linejoin="round"><path d="M8 8h.01" stroke-width="2.800"/><path d="M2 5.200v4.470c0 .490 0 .730.060.960.050.200.130.400.240.580.120.200.300.370.640.720l7.670 7.670c1.190 1.190 1.780 1.780 2.470 2 .600.200 1.250.200 1.850 0 .690-.220 1.280-.810 2.470-2l2.200-2.200c1.190-1.190 1.780-1.780 2-2.470.200-.600.200-1.250 0-1.850-.220-.690-.810-1.280-2-2.470l-7.670-7.670c-.350-.350-.520-.520-.720-.640a2 2 0 0 0-.580-.240C10.400 2 10.160 2 9.670 2H5.200c-1.120 0-1.680 0-2.110.220a2 2 0 0 0-.870.870C2 3.520 2 4.080 2 5.200z"/></svg></div>
<div class="ci" style="left:258px;top:445px"><svg viewBox="0 0 24 24" fill="none" stroke="currentColor" stroke-width="2" stroke-linecap="round" stroke-linejoin="round"><path d="M14 2.270V6.400c0 .560 0 .840.110 1.050.100.190.250.340.440.440.210.110.490.110 1.050.110h4.130M14 17H8M16 13H8M20 9.990V17.200c0 1.680 0 2.520-.330 3.160a3 3 0 0 1-1.310 1.310c-.640.330-1.480.330-3.160.330H8.800c-1.680 0-2.520 0-3.160-.330a3 3 0 0 1-1.310-1.310C4 19.720 4 18.880 4 17.200V6.800c0-1.680 0-2.520.330-3.160a3 3 0 0 1 1.310-1.310C6.280 2 7.120 2 8.800 2h3.210c.730 0 1.100 0 1.450.080.310.070.600.200.870.360.300.190.560.450 1.080.960l3.190 3.190c.520.520.780.780.960 1.080.170.270.290.560.360.870.080.350.080.710.080 1.450z"/></svg></div>
<div class="ci" style="left:336px;top:445px"><svg viewBox="0 0 24 24" fill="none" stroke="currentColor" stroke-width="2" stroke-linecap="round" stroke-linejoin="round"><path d="M8 12.300l2.700 2.700L16.300 9.400"/><rect x="3" y="3" width="18" height="18" rx="3.500"/></svg></div>
<div class="ci" style="left:414px;top:443px"><svg viewBox="0 0 24 24" fill="none" stroke="currentColor" stroke-width="2" stroke-linecap="round" stroke-linejoin="round"><rect x="3" y="4" width="18" height="18" rx="3.500"/><path d="M3 10h18M8 2v4M16 2v4M12 13v6M9 16h6"/></svg></div>
<div class="bdg" style="left:201px;top:430px">2</div>
<div class="bdg" style="left:279px;top:430px">1</div>
<div class="pb" style="left:24px;top:520px"><i class="g" style="left:0.0px"></i><i class="" style="left:163.7px"></i><i class="" style="left:327.4px"></i><i class="" style="left:491.1px"></i><i class="" style="left:654.8px"></i></div>
</div>
<div class="card" style="top:2127px;height:565px">
<div class="t" style="left:25.5px;top:45.9px;font-size:45px;color:#000;font-weight:400;letter-spacing:0.08px;">Prime Pet Clinic - Annual Contract</div>
<div class="av" style="left:764px;top:23px"><svg viewBox="0 0 24 24" fill="none" stroke="currentColor" stroke-width="2" stroke-linecap="round" stroke-linejoin="round"><circle cx="10" cy="7.500" r="4"/><path d="M3 21v-1.500a5 5 0 0 1 5-5h3.500M16.500 16l4.500 4.500M21 16l-4.500 4.500"/></svg></div>
<div class="t" style="left:27px;top:171.0px;font-size:36px;color:#5f717d;font-weight:700;letter-spacing:0.06px;">Business Name:</div>
<div class="t" style="left:353px;top:171.0px;font-size:36px;color:#5a6b78;font-weight:400;letter-spacing:0.8px;">Prime Pet Clinic</div>
<div class="t" style="left:27px;top:261.0px;font-size:36px;color:#5f717d;font-weight:700;letter-spacing:0.44px;">Opportunity S...</div>
<div class="t" style="left:353px;top:261.0px;font-size:36px;color:#5a6b78;font-weight:400;letter-spacing:0.8px;">Referral</div>
<div class="t" style="left:27px;top:351.0px;font-size:36px;color:#5f717d;font-weight:700;letter-spacing:0.64px;">Opportunity V...</div>
<div class="t" style="left:353px;top:351.0px;font-size:36px;color:#5a6b78;font-weight:400;letter-spacing:0.8px;">$4<span class="ns"> </span>800,00</div>
<div class="ci" style="left:24px;top:445px"><svg viewBox="0 0 24 24" fill="none" stroke="currentColor" stroke-width="2" stroke-linecap="round" stroke-linejoin="round"><path d="M14.050 6A5 5 0 0 1 18 9.950M14.050 2A9 9 0 0 1 22 9.940M10.230 13.860a14.600 14.600 0 0 1-2.850-4.010 1 1 0 0 1 .200-1.140l.300-.300c.830-.830.830-2 0-2.830L6.200 3.900a2 2 0 0 0-2.830 0l-.760.760c-.860.860-1.230 2.070-1 3.260.570 2.950 2.300 6.390 5.170 9.260s6.310 4.600 9.260 5.170c1.190.230 2.400-.140 3.260-1l.760-.760a2 2 0 0 0 0-2.830l-1.680-1.680a2 2 0 0 0-2.830 0l-.300.300a1 1 0 0 1-1.140.200 14.600 14.600 0 0 1-3.880-2.720z"/></svg></div>
<div class="ci" style="left:102px;top:445px"><svg viewBox="0 0 24 24" fill="none" stroke="currentColor" stroke-width="2" stroke-linecap="round" stroke-linejoin="round"><path d="M21 12a9 9 0 0 1-12.600 8.250L3 21l1-4.400A9 9 0 1 1 21 12z"/><path d="M7.500 12h.01M12 12h.01M16.500 12h.01" stroke-width="2.600"/></svg></div>
<div class="ci" style="left:180px;top:445px"><svg viewBox="0 0 24 24" fill="none" stroke="currentColor" stroke-width="2" stroke-linecap="round" stroke-linejoin="round"><path d="M8 8h.01" stroke-width="2.800"/><path d="M2 5.200v4.470c0 .490 0 .730.060.960.050.200.130.400.240.580.120.200.300.370.640.720l7.670 7.670c1.190 1.190 1.780 1.780 2.470 2 .600.200 1.250.200 1.850 0 .690-.220 1.280-.810 2.470-2l2.200-2.200c1.190-1.190 1.780-1.780 2-2.470.200-.600.200-1.250 0-1.850-.220-.690-.810-1.280-2-2.470l-7.670-7.670c-.350-.350-.520-.520-.720-.640a2 2 0 0 0-.580-.240C10.400 2 10.160 2 9.670 2H5.200c-1.120 0-1.680 0-2.110.220a2 2 0 0 0-.870.870C2 3.520 2 4.080 2 5.200z"/></svg></div>
<div class="ci" style="left:258px;top:445px"><svg viewBox="0 0 24 24" fill="none" stroke="currentColor" stroke-width="2" stroke-linecap="round" stroke-linejoin="round"><path d="M14 2.270V6.400c0 .560 0 .840.110 1.050.100.190.250.340.440.440.210.110.490.110 1.050.110h4.130M14 17H8M16 13H8M20 9.990V17.200c0 1.680 0 2.520-.330 3.160a3 3 0 0 1-1.310 1.310c-.640.330-1.480.330-3.160.330H8.800c-1.680 0-2.520 0-3.160-.330a3 3 0 0 1-1.310-1.310C4 19.720 4 18.880 4 17.200V6.800c0-1.680 0-2.520.330-3.160a3 3 0 0 1 1.310-1.310C6.280 2 7.120 2 8.800 2h3.210c.730 0 1.100 0 1.450.080.310.070.600.200.870.360.300.190.560.450 1.080.960l3.190 3.190c.520.520.780.780.960 1.080.170.270.290.560.360.870.080.350.080.710.080 1.450z"/></svg></div>
<div class="ci" style="left:336px;top:445px"><svg viewBox="0 0 24 24" fill="none" stroke="currentColor" stroke-width="2" stroke-linecap="round" stroke-linejoin="round"><path d="M8 12.300l2.700 2.700L16.300 9.400"/><rect x="3" y="3" width="18" height="18" rx="3.500"/></svg></div>
<div class="ci" style="left:414px;top:443px"><svg viewBox="0 0 24 24" fill="none" stroke="currentColor" stroke-width="2" stroke-linecap="round" stroke-linejoin="round"><rect x="3" y="4" width="18" height="18" rx="3.500"/><path d="M3 10h18M8 2v4M16 2v4M12 13v6M9 16h6"/></svg></div>
<div class="bdg" style="left:201px;top:430px">2</div>
<div class="bdg" style="left:279px;top:430px">1</div>
<div class="pb" style="left:24px;top:520px"><i class="g" style="left:0.0px"></i><i class="" style="left:163.7px"></i><i class="" style="left:327.4px"></i><i class="" style="left:491.1px"></i><i class="" style="left:654.8px"></i></div>
</div>
</div>
<div class="col" style="left:945px">
<div class="ch" style="border-top-color:#079669"></div>
<div class="t" style="left:38.5px;top:53.9px;font-size:42px;color:#101828;font-weight:700;letter-spacing:0.17px;">April</div>
<div class="t" style="left:40px;top:121.0px;font-size:36px;color:#667085;font-weight:400;letter-spacing:0.96px;">31 Opportunities</div>
<div class="t" style="left:auto;right:118px;top:52.9px;font-size:42px;color:#16a34a;font-weight:700;letter-spacing:2.62px;">$93<span class="ns"> </span>600,00</div>
<div class="t" style="left:409px;top:119.0px;font-size:42px;color:#101828;font-weight:700;letter-spacing:1.44px;">+92% of $107<span class="ns"> </span>60...</div>
<div class="t" style="left:auto;right:118px;top:185.4px;font-size:42px;color:#101828;font-weight:700;letter-spacing:2.62px;">$99<span class="ns"> </span>000,00</div>
<div class="abs" style="left:825px;top:51px;width:42px;height:42px;color:#667085;"><svg viewBox="0 0 24 24" fill="none" stroke="currentColor" stroke-width="2" stroke-linecap="round" stroke-linejoin="round"><path d="M15 5l-7 7 7 7"/></svg></div>
<div class="card won" style="top:360px;height:565px">
<div class="t" style="left:25.5px;top:45.9px;font-size:45px;color:#000;font-weight:400;letter-spacing:0.24px;">North Jersey Auto Care - P...</div>
<div class="wonb" style="left:616px;top:44px">WON</div>
<div class="av" style="left:764px;top:23px"><svg viewBox="0 0 24 24" fill="none" stroke="currentColor" stroke-width="2" stroke-linecap="round" stroke-linejoin="round"><circle cx="10" cy="7.500" r="4"/><path d="M3 21v-1.500a5 5 0 0 1 5-5h3.500M16.500 16l4.500 4.500M21 16l-4.500 4.500"/></svg></div>
<div class="t" style="left:27px;top:171.0px;font-size:36px;color:#5f717d;font-weight:700;letter-spacing:0.06px;">Business Name:</div>
<div class="t" style="left:353px;top:171.0px;font-size:36px;color:#5a6b78;font-weight:400;letter-spacing:0.8px;">North Jersey Auto Care</div>
<div class="t" style="left:27px;top:261.0px;font-size:36px;color:#5f717d;font-weight:700;letter-spacing:0.44px;">Opportunity S...</div>
<div class="t" style="left:353px;top:261.0px;font-size:36px;color:#5a6b78;font-weight:400;letter-spacing:0.8px;">Email Campaign</div>
<div class="t" style="left:27px;top:351.0px;font-size:36px;color:#5f717d;font-weight:700;letter-spacing:0.64px;">Opportunity V...</div>
<div class="t" style="left:353px;top:351.0px;font-size:36px;color:#5a6b78;font-weight:400;letter-spacing:0.8px;">$2<span class="ns"> </span>200,00</div>
<div class="ci" style="left:24px;top:445px"><svg viewBox="0 0 24 24" fill="none" stroke="currentColor" stroke-width="2" stroke-linecap="round" stroke-linejoin="round"><path d="M14.050 6A5 5 0 0 1 18 9.950M14.050 2A9 9 0 0 1 22 9.940M10.230 13.860a14.600 14.600 0 0 1-2.850-4.010 1 1 0 0 1 .200-1.140l.300-.300c.830-.830.830-2 0-2.830L6.200 3.900a2 2 0 0 0-2.830 0l-.760.760c-.860.860-1.230 2.070-1 3.260.570 2.950 2.300 6.390 5.170 9.260s6.310 4.600 9.260 5.170c1.190.230 2.400-.140 3.260-1l.760-.760a2 2 0 0 0 0-2.830l-1.680-1.680a2 2 0 0 0-2.830 0l-.300.300a1 1 0 0 1-1.140.200 14.600 14.600 0 0 1-3.880-2.720z"/></svg></div>
<div class="ci" style="left:102px;top:445px"><svg viewBox="0 0 24 24" fill="none" stroke="currentColor" stroke-width="2" stroke-linecap="round" stroke-linejoin="round"><path d="M21 12a9 9 0 0 1-12.600 8.250L3 21l1-4.400A9 9 0 1 1 21 12z"/><path d="M7.500 12h.01M12 12h.01M16.500 12h.01" stroke-width="2.600"/></svg></div>
<div class="ci" style="left:180px;top:445px"><svg viewBox="0 0 24 24" fill="none" stroke="currentColor" stroke-width="2" stroke-linecap="round" stroke-linejoin="round"><path d="M8 8h.01" stroke-width="2.800"/><path d="M2 5.200v4.470c0 .490 0 .730.060.960.050.200.130.400.240.580.120.200.300.370.640.720l7.670 7.670c1.190 1.190 1.780 1.780 2.470 2 .600.200 1.250.200 1.850 0 .690-.220 1.280-.810 2.470-2l2.200-2.200c1.190-1.190 1.780-1.780 2-2.470.200-.600.200-1.250 0-1.850-.220-.690-.810-1.280-2-2.470l-7.670-7.670c-.350-.350-.520-.520-.720-.640a2 2 0 0 0-.580-.240C10.400 2 10.160 2 9.670 2H5.200c-1.120 0-1.680 0-2.110.220a2 2 0 0 0-.870.870C2 3.520 2 4.080 2 5.200z"/></svg></div>
<div class="ci" style="left:258px;top:445px"><svg viewBox="0 0 24 24" fill="none" stroke="currentColor" stroke-width="2" stroke-linecap="round" stroke-linejoin="round"><path d="M14 2.270V6.400c0 .560 0 .840.110 1.050.100.190.250.340.440.440.210.110.490.110 1.050.110h4.130M14 17H8M16 13H8M20 9.990V17.200c0 1.680 0 2.520-.330 3.160a3 3 0 0 1-1.310 1.310c-.640.330-1.480.330-3.160.330H8.800c-1.680 0-2.520 0-3.160-.330a3 3 0 0 1-1.310-1.310C4 19.720 4 18.880 4 17.200V6.800c0-1.680 0-2.520.330-3.160a3 3 0 0 1 1.310-1.310C6.280 2 7.120 2 8.800 2h3.210c.730 0 1.100 0 1.450.080.310.070.600.200.870.360.300.190.560.450 1.080.960l3.190 3.190c.520.520.780.780.960 1.080.170.270.290.560.360.870.080.350.080.710.080 1.450z"/></svg></div>
<div class="ci" style="left:336px;top:445px"><svg viewBox="0 0 24 24" fill="none" stroke="currentColor" stroke-width="2" stroke-linecap="round" stroke-linejoin="round"><path d="M8 12.300l2.700 2.700L16.300 9.400"/><rect x="3" y="3" width="18" height="18" rx="3.500"/></svg></div>
<div class="ci" style="left:414px;top:443px"><svg viewBox="0 0 24 24" fill="none" stroke="currentColor" stroke-width="2" stroke-linecap="round" stroke-linejoin="round"><rect x="3" y="4" width="18" height="18" rx="3.500"/><path d="M3 10h18M8 2v4M16 2v4M12 13v6M9 16h6"/></svg></div>
<div class="bdg" style="left:201px;top:430px">2</div>
<div class="bdg" style="left:279px;top:430px">1</div>
<div class="pb" style="left:24px;top:520px"><i class="g" style="left:0.0px"></i><i class="g" style="left:163.7px"></i><i class="g" style="left:327.4px"></i><i class="g" style="left:491.1px"></i><i class="g" style="left:654.8px"></i></div>
</div>
<div class="card won" style="top:949px;height:565px">
<div class="t" style="left:25.5px;top:45.9px;font-size:45px;color:#000;font-weight:400;letter-spacing:0.06px;">Maple IT Services - Pilot P...</div>
<div class="wonb" style="left:616px;top:44px">WON</div>
<div class="av" style="left:764px;top:23px"><svg viewBox="0 0 24 24" fill="none" stroke="currentColor" stroke-width="2" stroke-linecap="round" stroke-linejoin="round"><circle cx="10" cy="7.500" r="4"/><path d="M3 21v-1.500a5 5 0 0 1 5-5h3.500M16.500 16l4.500 4.500M21 16l-4.500 4.500"/></svg></div>
<div class="t" style="left:27px;top:171.0px;font-size:36px;color:#5f717d;font-weight:700;letter-spacing:0.06px;">Business Name:</div>
<div class="t" style="left:353px;top:171.0px;font-size:36px;color:#5a6b78;font-weight:400;letter-spacing:0.8px;">Maple IT Services</div>
<div class="t" style="left:27px;top:261.0px;font-size:36px;color:#5f717d;font-weight:700;letter-spacing:0.44px;">Opportunity S...</div>
<div class="t" style="left:353px;top:261.0px;font-size:36px;color:#5a6b78;font-weight:400;letter-spacing:0.8px;">Walk-in</div>
<div class="t" style="left:27px;top:351.0px;font-size:36px;color:#5f717d;font-weight:700;letter-spacing:0.64px;">Opportunity V...</div>
<div class="t" style="left:353px;top:351.0px;font-size:36px;color:#5a6b78;font-weight:400;letter-spacing:0.8px;">$3<span class="ns"> </span>000,00</div>
<div class="ci" style="left:24px;top:445px"><svg viewBox="0 0 24 24" fill="none" stroke="currentColor" stroke-width="2" stroke-linecap="round" stroke-linejoin="round"><path d="M14.050 6A5 5 0 0 1 18 9.950M14.050 2A9 9 0 0 1 22 9.940M10.230 13.860a14.600 14.600 0 0 1-2.850-4.010 1 1 0 0 1 .200-1.140l.300-.300c.830-.830.830-2 0-2.830L6.200 3.900a2 2 0 0 0-2.830 0l-.760.760c-.860.860-1.230 2.070-1 3.260.570 2.950 2.300 6.390 5.170 9.260s6.310 4.600 9.260 5.170c1.190.230 2.400-.140 3.260-1l.760-.760a2 2 0 0 0 0-2.830l-1.680-1.680a2 2 0 0 0-2.830 0l-.300.300a1 1 0 0 1-1.140.200 14.600 14.600 0 0 1-3.880-2.720z"/></svg></div>
<div class="ci" style="left:102px;top:445px"><svg viewBox="0 0 24 24" fill="none" stroke="currentColor" stroke-width="2" stroke-linecap="round" stroke-linejoin="round"><path d="M21 12a9 9 0 0 1-12.600 8.250L3 21l1-4.400A9 9 0 1 1 21 12z"/><path d="M7.500 12h.01M12 12h.01M16.500 12h.01" stroke-width="2.600"/></svg></div>
<div class="ci" style="left:180px;top:445px"><svg viewBox="0 0 24 24" fill="none" stroke="currentColor" stroke-width="2" stroke-linecap="round" stroke-linejoin="round"><path d="M8 8h.01" stroke-width="2.800"/><path d="M2 5.200v4.470c0 .490 0 .730.060.960.050.200.130.400.240.580.120.200.300.370.640.720l7.670 7.670c1.190 1.190 1.780 1.780 2.470 2 .600.200 1.250.200 1.850 0 .690-.220 1.280-.810 2.470-2l2.200-2.200c1.190-1.190 1.780-1.780 2-2.470.200-.600.200-1.250 0-1.850-.220-.690-.810-1.280-2-2.470l-7.670-7.670c-.350-.350-.520-.520-.720-.640a2 2 0 0 0-.580-.240C10.400 2 10.160 2 9.670 2H5.200c-1.120 0-1.680 0-2.110.220a2 2 0 0 0-.870.870C2 3.520 2 4.080 2 5.200z"/></svg></div>
<div class="ci" style="left:258px;top:445px"><svg viewBox="0 0 24 24" fill="none" stroke="currentColor" stroke-width="2" stroke-linecap="round" stroke-linejoin="round"><path d="M14 2.270V6.400c0 .560 0 .840.110 1.050.100.190.250.340.440.440.210.110.490.110 1.050.110h4.130M14 17H8M16 13H8M20 9.990V17.200c0 1.680 0 2.520-.330 3.160a3 3 0 0 1-1.310 1.310c-.640.330-1.480.330-3.160.330H8.800c-1.680 0-2.520 0-3.160-.330a3 3 0 0 1-1.310-1.310C4 19.720 4 18.880 4 17.200V6.800c0-1.680 0-2.520.330-3.160a3 3 0 0 1 1.310-1.310C6.280 2 7.120 2 8.800 2h3.210c.730 0 1.100 0 1.450.080.310.070.600.200.870.360.300.190.560.450 1.080.960l3.190 3.190c.520.520.780.780.960 1.080.170.270.290.560.360.870.080.350.080.710.080 1.450z"/></svg></div>
<div class="ci" style="left:336px;top:445px"><svg viewBox="0 0 24 24" fill="none" stroke="currentColor" stroke-width="2" stroke-linecap="round" stroke-linejoin="round"><path d="M8 12.300l2.700 2.700L16.300 9.400"/><rect x="3" y="3" width="18" height="18" rx="3.500"/></svg></div>
<div class="ci" style="left:414px;top:443px"><svg viewBox="0 0 24 24" fill="none" stroke="currentColor" stroke-width="2" stroke-linecap="round" stroke-linejoin="round"><rect x="3" y="4" width="18" height="18" rx="3.500"/><path d="M3 10h18M8 2v4M16 2v4M12 13v6M9 16h6"/></svg></div>
<div class="bdg" style="left:201px;top:430px">2</div>
<div class="bdg" style="left:279px;top:430px">1</div>
<div class="pb" style="left:24px;top:520px"><i class="g" style="left:0.0px"></i><i class="g" style="left:163.7px"></i><i class="g" style="left:327.4px"></i><i class="g" style="left:491.1px"></i><i class="g" style="left:654.8px"></i></div>
</div>
<div class="card won" style="top:1538px;height:565px">
<div class="t" style="left:25.5px;top:45.9px;font-size:45px;color:#000;font-weight:400;letter-spacing:-0.13px;">Clifton HVAC Pros - Pilot P...</div>
<div class="wonb" style="left:616px;top:44px">WON</div>
<div class="av" style="left:764px;top:23px"><svg viewBox="0 0 24 24" fill="none" stroke="currentColor" stroke-width="2" stroke-linecap="round" stroke-linejoin="round"><circle cx="10" cy="7.500" r="4"/><path d="M3 21v-1.500a5 5 0 0 1 5-5h3.500M16.500 16l4.500 4.500M21 16l-4.500 4.500"/></svg></div>
<div class="t" style="left:27px;top:171.0px;font-size:36px;color:#5f717d;font-weight:700;letter-spacing:0.06px;">Business Name:</div>
<div class="t" style="left:353px;top:171.0px;font-size:36px;color:#5a6b78;font-weight:400;letter-spacing:0.8px;">Clifton HVAC Pros</div>
<div class="t" style="left:27px;top:261.0px;font-size:36px;color:#5f717d;font-weight:700;letter-spacing:0.44px;">Opportunity S...</div>
<div class="t" style="left:353px;top:261.0px;font-size:36px;color:#5a6b78;font-weight:400;letter-spacing:0.8px;">Google Ads</div>
<div class="t" style="left:27px;top:351.0px;font-size:36px;color:#5f717d;font-weight:700;letter-spacing:0.64px;">Opportunity V...</div>
<div class="t" style="left:353px;top:351.0px;font-size:36px;color:#5a6b78;font-weight:400;letter-spacing:0.8px;">$2<span class="ns"> </span>500,00</div>
<div class="ci" style="left:24px;top:445px"><svg viewBox="0 0 24 24" fill="none" stroke="currentColor" stroke-width="2" stroke-linecap="round" stroke-linejoin="round"><path d="M14.050 6A5 5 0 0 1 18 9.950M14.050 2A9 9 0 0 1 22 9.940M10.230 13.860a14.600 14.600 0 0 1-2.850-4.010 1 1 0 0 1 .200-1.140l.300-.300c.830-.830.830-2 0-2.830L6.200 3.900a2 2 0 0 0-2.830 0l-.760.760c-.860.860-1.230 2.070-1 3.260.570 2.950 2.300 6.390 5.170 9.260s6.310 4.600 9.260 5.170c1.190.230 2.400-.140 3.260-1l.760-.760a2 2 0 0 0 0-2.830l-1.680-1.680a2 2 0 0 0-2.830 0l-.300.300a1 1 0 0 1-1.140.200 14.600 14.600 0 0 1-3.880-2.720z"/></svg></div>
<div class="ci" style="left:102px;top:445px"><svg viewBox="0 0 24 24" fill="none" stroke="currentColor" stroke-width="2" stroke-linecap="round" stroke-linejoin="round"><path d="M21 12a9 9 0 0 1-12.600 8.250L3 21l1-4.400A9 9 0 1 1 21 12z"/><path d="M7.500 12h.01M12 12h.01M16.500 12h.01" stroke-width="2.600"/></svg></div>
<div class="ci" style="left:180px;top:445px"><svg viewBox="0 0 24 24" fill="none" stroke="currentColor" stroke-width="2" stroke-linecap="round" stroke-linejoin="round"><path d="M8 8h.01" stroke-width="2.800"/><path d="M2 5.200v4.470c0 .490 0 .730.060.960.050.200.130.400.240.580.120.200.300.370.640.720l7.670 7.670c1.190 1.190 1.780 1.780 2.470 2 .600.200 1.250.200 1.850 0 .690-.220 1.280-.810 2.470-2l2.200-2.200c1.190-1.190 1.780-1.780 2-2.470.200-.600.200-1.250 0-1.850-.220-.690-.810-1.280-2-2.470l-7.670-7.670c-.350-.350-.520-.520-.720-.640a2 2 0 0 0-.580-.240C10.400 2 10.160 2 9.670 2H5.200c-1.120 0-1.680 0-2.110.220a2 2 0 0 0-.870.870C2 3.520 2 4.080 2 5.200z"/></svg></div>
<div class="ci" style="left:258px;top:445px"><svg viewBox="0 0 24 24" fill="none" stroke="currentColor" stroke-width="2" stroke-linecap="round" stroke-linejoin="round"><path d="M14 2.270V6.400c0 .560 0 .840.110 1.050.100.190.250.340.440.440.210.110.490.110 1.050.110h4.130M14 17H8M16 13H8M20 9.990V17.200c0 1.680 0 2.520-.330 3.160a3 3 0 0 1-1.310 1.310c-.640.330-1.480.330-3.160.330H8.800c-1.680 0-2.520 0-3.160-.330a3 3 0 0 1-1.310-1.310C4 19.720 4 18.880 4 17.200V6.800c0-1.680 0-2.520.330-3.160a3 3 0 0 1 1.310-1.310C6.280 2 7.120 2 8.800 2h3.210c.730 0 1.100 0 1.450.080.310.070.600.200.870.360.300.190.560.450 1.080.960l3.190 3.190c.520.520.780.780.960 1.080.170.270.290.560.360.870.080.350.080.710.080 1.450z"/></svg></div>
<div class="ci" style="left:336px;top:445px"><svg viewBox="0 0 24 24" fill="none" stroke="currentColor" stroke-width="2" stroke-linecap="round" stroke-linejoin="round"><path d="M8 12.300l2.700 2.700L16.300 9.400"/><rect x="3" y="3" width="18" height="18" rx="3.500"/></svg></div>
<div class="ci" style="left:414px;top:443px"><svg viewBox="0 0 24 24" fill="none" stroke="currentColor" stroke-width="2" stroke-linecap="round" stroke-linejoin="round"><rect x="3" y="4" width="18" height="18" rx="3.500"/><path d="M3 10h18M8 2v4M16 2v4M12 13v6M9 16h6"/></svg></div>
<div class="bdg" style="left:201px;top:430px">2</div>
<div class="bdg" style="left:279px;top:430px">1</div>
<div class="pb" style="left:24px;top:520px"><i class="g" style="left:0.0px"></i><i class="g" style="left:163.7px"></i><i class="g" style="left:327.4px"></i><i class="g" style="left:491.1px"></i><i class="g" style="left:654.8px"></i></div>
</div>
<div class="card won" style="top:2127px;height:565px">
<div class="t" style="left:25.5px;top:45.9px;font-size:45px;color:#000;font-weight:400;letter-spacing:-0.41px;">Ironwood Cleaning Service ...</div>
<div class="wonb" style="left:616px;top:44px">WON</div>
<div class="av" style="left:764px;top:23px"><svg viewBox="0 0 24 24" fill="none" stroke="currentColor" stroke-width="2" stroke-linecap="round" stroke-linejoin="round"><circle cx="10" cy="7.500" r="4"/><path d="M3 21v-1.500a5 5 0 0 1 5-5h3.500M16.500 16l4.500 4.500M21 16l-4.500 4.500"/></svg></div>
<div class="t" style="left:27px;top:171.0px;font-size:36px;color:#5f717d;font-weight:700;letter-spacing:0.06px;">Business Name:</div>
<div class="t" style="left:353px;top:171.0px;font-size:36px;color:#5a6b78;font-weight:400;letter-spacing:0.8px;">Ironwood Cleaning Service</div>
<div class="t" style="left:27px;top:261.0px;font-size:36px;color:#5f717d;font-weight:700;letter-spacing:0.44px;">Opportunity S...</div>
<div class="t" style="left:353px;top:261.0px;font-size:36px;color:#5a6b78;font-weight:400;letter-spacing:0.8px;">Referral</div>
<div class="t" style="left:27px;top:351.0px;font-size:36px;color:#5f717d;font-weight:700;letter-spacing:0.64px;">Opportunity V...</div>
<div class="t" style="left:353px;top:351.0px;font-size:36px;color:#5a6b78;font-weight:400;letter-spacing:0.8px;">$1<span class="ns"> </span>800,00</div>
<div class="ci" style="left:24px;top:445px"><svg viewBox="0 0 24 24" fill="none" stroke="currentColor" stroke-width="2" stroke-linecap="round" stroke-linejoin="round"><path d="M14.050 6A5 5 0 0 1 18 9.950M14.050 2A9 9 0 0 1 22 9.940M10.230 13.860a14.600 14.600 0 0 1-2.850-4.010 1 1 0 0 1 .200-1.140l.300-.300c.830-.830.830-2 0-2.830L6.200 3.900a2 2 0 0 0-2.830 0l-.760.760c-.860.860-1.230 2.070-1 3.260.570 2.950 2.300 6.390 5.170 9.260s6.310 4.600 9.260 5.170c1.190.230 2.400-.140 3.260-1l.760-.760a2 2 0 0 0 0-2.830l-1.680-1.680a2 2 0 0 0-2.830 0l-.300.300a1 1 0 0 1-1.140.200 14.600 14.600 0 0 1-3.880-2.720z"/></svg></div>
<div class="ci" style="left:102px;top:445px"><svg viewBox="0 0 24 24" fill="none" stroke="currentColor" stroke-width="2" stroke-linecap="round" stroke-linejoin="round"><path d="M21 12a9 9 0 0 1-12.600 8.250L3 21l1-4.400A9 9 0 1 1 21 12z"/><path d="M7.500 12h.01M12 12h.01M16.500 12h.01" stroke-width="2.600"/></svg></div>
<div class="ci" style="left:180px;top:445px"><svg viewBox="0 0 24 24" fill="none" stroke="currentColor" stroke-width="2" stroke-linecap="round" stroke-linejoin="round"><path d="M8 8h.01" stroke-width="2.800"/><path d="M2 5.200v4.470c0 .490 0 .730.060.960.050.200.130.400.240.580.120.200.300.370.640.720l7.670 7.670c1.190 1.190 1.780 1.780 2.470 2 .600.200 1.250.200 1.850 0 .690-.220 1.280-.810 2.470-2l2.200-2.200c1.190-1.190 1.780-1.780 2-2.470.200-.600.200-1.250 0-1.850-.220-.690-.810-1.280-2-2.470l-7.670-7.670c-.350-.350-.520-.520-.720-.640a2 2 0 0 0-.580-.240C10.400 2 10.160 2 9.670 2H5.200c-1.120 0-1.680 0-2.110.220a2 2 0 0 0-.870.870C2 3.520 2 4.080 2 5.200z"/></svg></div>
<div class="ci" style="left:258px;top:445px"><svg viewBox="0 0 24 24" fill="none" stroke="currentColor" stroke-width="2" stroke-linecap="round" stroke-linejoin="round"><path d="M14 2.270V6.400c0 .560 0 .840.110 1.050.100.190.250.340.440.440.210.110.490.110 1.050.110h4.130M14 17H8M16 13H8M20 9.990V17.200c0 1.680 0 2.520-.330 3.160a3 3 0 0 1-1.310 1.310c-.640.330-1.480.330-3.160.330H8.800c-1.680 0-2.520 0-3.160-.330a3 3 0 0 1-1.310-1.310C4 19.720 4 18.880 4 17.200V6.800c0-1.680 0-2.520.330-3.160a3 3 0 0 1 1.310-1.310C6.280 2 7.120 2 8.800 2h3.210c.730 0 1.100 0 1.450.080.310.070.600.200.870.360.300.190.560.450 1.080.960l3.190 3.190c.520.520.780.780.960 1.080.170.270.290.560.360.870.080.350.080.710.080 1.450z"/></svg></div>
<div class="ci" style="left:336px;top:445px"><svg viewBox="0 0 24 24" fill="none" stroke="currentColor" stroke-width="2" stroke-linecap="round" stroke-linejoin="round"><path d="M8 12.300l2.700 2.700L16.300 9.400"/><rect x="3" y="3" width="18" height="18" rx="3.500"/></svg></div>
<div class="ci" style="left:414px;top:443px"><svg viewBox="0 0 24 24" fill="none" stroke="currentColor" stroke-width="2" stroke-linecap="round" stroke-linejoin="round"><rect x="3" y="4" width="18" height="18" rx="3.500"/><path d="M3 10h18M8 2v4M16 2v4M12 13v6M9 16h6"/></svg></div>
<div class="bdg" style="left:201px;top:430px">2</div>
<div class="bdg" style="left:279px;top:430px">1</div>
<div class="pb" style="left:24px;top:520px"><i class="g" style="left:0.0px"></i><i class="g" style="left:163.7px"></i><i class="g" style="left:327.4px"></i><i class="g" style="left:491.1px"></i><i class="g" style="left:654.8px"></i></div>
</div>
</div>
<div class="col" style="left:1890px">
<div class="ch" style="border-top-color:#16a34a"></div>
<div class="t" style="left:38.5px;top:53.9px;font-size:42px;color:#101828;font-weight:700;letter-spacing:0.77px;">May</div>
<div class="t" style="left:40px;top:121.0px;font-size:36px;color:#667085;font-weight:400;letter-spacing:1.19px;">2 Opportunities</div>
<div class="t" style="left:auto;right:118px;top:52.9px;font-size:42px;color:#16a34a;font-weight:700;letter-spacing:2.18px;">$0,00</div>
<div class="t" style="left:409px;top:119.0px;font-size:42px;color:#101828;font-weight:700;letter-spacing:1.44px;">+20% of $16<span class="ns"> </span>200...</div>
<div class="t" style="left:auto;right:118px;top:185.4px;font-size:42px;color:#101828;font-weight:700;letter-spacing:2.34px;">$3<span class="ns"> </span>240,00</div>
<div class="abs" style="left:816px;top:42px;width:60px;height:60px;border-radius:14px;background:#f2f4f7"></div>
<div class="abs" style="left:825px;top:51px;width:42px;height:42px;color:#667085;"><svg viewBox="0 0 24 24" fill="none" stroke="currentColor" stroke-width="2" stroke-linecap="round" stroke-linejoin="round"><path d="M15 5l-7 7 7 7"/></svg></div>
<div class="card" style="top:360px;height:655px">
<div class="t" style="left:25.5px;top:45.9px;font-size:45px;color:#000;font-weight:400;letter-spacing:0.08px;">Ironwood Insurance Group - Servi...</div>
<div class="av" style="left:764px;top:23px"><svg viewBox="0 0 24 24" fill="none" stroke="currentColor" stroke-width="2" stroke-linecap="round" stroke-linejoin="round"><circle cx="10" cy="7.500" r="4"/><path d="M3 21v-1.500a5 5 0 0 1 5-5h3.500M16.500 16l4.500 4.500M21 16l-4.500 4.500"/></svg></div>
<div class="t" style="left:27px;top:171.0px;font-size:36px;color:#5f717d;font-weight:700;letter-spacing:0.06px;">Business Name:</div>
<div class="t" style="left:353px;top:171.0px;font-size:36px;color:#5a6b78;font-weight:400;letter-spacing:0.8px;">Ironwood Insurance Group</div>
<div class="t" style="left:27px;top:261.0px;font-size:36px;color:#5f717d;font-weight:700;letter-spacing:0.44px;">Opportunity S...</div>
<div class="t" style="left:353px;top:261.0px;font-size:36px;color:#5a6b78;font-weight:400;letter-spacing:0.8px;">Organic Search</div>
<div class="t" style="left:27px;top:351.0px;font-size:36px;color:#5f717d;font-weight:700;letter-spacing:0.64px;">Opportunity V...</div>
<div class="t" style="left:353px;top:351.0px;font-size:36px;color:#5a6b78;font-weight:400;letter-spacing:0.8px;">$15<span class="ns"> </span>000,00</div>
<div class="t" style="left:27px;top:441.0px;font-size:36px;color:#5f717d;font-weight:700;letter-spacing:0.31px;">Expected Clos...</div>
<div class="t" style="left:353px;top:441.0px;font-size:36px;color:#5a6b78;font-weight:400;letter-spacing:0.8px;">May 14, 2026</div>
<div class="ci" style="left:24px;top:535px"><svg viewBox="0 0 24 24" fill="none" stroke="currentColor" stroke-width="2" stroke-linecap="round" stroke-linejoin="round"><path d="M14.050 6A5 5 0 0 1 18 9.950M14.050 2A9 9 0 0 1 22 9.940M10.230 13.860a14.600 14.600 0 0 1-2.850-4.010 1 1 0 0 1 .200-1.140l.300-.300c.830-.830.830-2 0-2.830L6.200 3.900a2 2 0 0 0-2.830 0l-.760.760c-.860.860-1.230 2.070-1 3.260.570 2.950 2.300 6.390 5.170 9.260s6.310 4.600 9.260 5.170c1.190.230 2.400-.140 3.260-1l.760-.760a2 2 0 0 0 0-2.830l-1.680-1.680a2 2 0 0 0-2.830 0l-.300.300a1 1 0 0 1-1.140.200 14.600 14.600 0 0 1-3.880-2.720z"/></svg></div>
<div class="ci" style="left:102px;top:535px"><svg viewBox="0 0 24 24" fill="none" stroke="currentColor" stroke-width="2" stroke-linecap="round" stroke-linejoin="round"><path d="M21 12a9 9 0 0 1-12.600 8.250L3 21l1-4.400A9 9 0 1 1 21 12z"/><path d="M7.500 12h.01M12 12h.01M16.500 12h.01" stroke-width="2.600"/></svg></div>
<div class="ci" style="left:180px;top:535px"><svg viewBox="0 0 24 24" fill="none" stroke="currentColor" stroke-width="2" stroke-linecap="round" stroke-linejoin="round"><path d="M8 8h.01" stroke-width="2.800"/><path d="M2 5.200v4.470c0 .490 0 .730.060.960.050.200.130.400.240.580.120.200.300.370.640.720l7.670 7.670c1.190 1.190 1.780 1.780 2.470 2 .600.200 1.250.200 1.850 0 .690-.220 1.280-.810 2.470-2l2.200-2.200c1.190-1.190 1.780-1.780 2-2.470.200-.600.200-1.250 0-1.850-.220-.690-.810-1.280-2-2.470l-7.670-7.670c-.350-.350-.520-.520-.720-.640a2 2 0 0 0-.580-.240C10.400 2 10.160 2 9.670 2H5.200c-1.120 0-1.680 0-2.110.220a2 2 0 0 0-.870.870C2 3.520 2 4.080 2 5.200z"/></svg></div>
<div class="ci" style="left:258px;top:535px"><svg viewBox="0 0 24 24" fill="none" stroke="currentColor" stroke-width="2" stroke-linecap="round" stroke-linejoin="round"><path d="M14 2.270V6.400c0 .560 0 .840.110 1.050.100.190.250.340.440.440.210.110.490.110 1.050.110h4.130M14 17H8M16 13H8M20 9.990V17.200c0 1.680 0 2.520-.330 3.160a3 3 0 0 1-1.310 1.310c-.640.330-1.480.330-3.160.330H8.800c-1.680 0-2.520 0-3.160-.330a3 3 0 0 1-1.310-1.310C4 19.720 4 18.880 4 17.200V6.800c0-1.680 0-2.520.330-3.160a3 3 0 0 1 1.310-1.310C6.280 2 7.120 2 8.800 2h3.210c.730 0 1.100 0 1.450.080.310.070.600.200.870.360.300.190.560.450 1.080.960l3.190 3.190c.520.520.780.780.960 1.080.170.270.290.560.360.870.080.350.080.710.080 1.450z"/></svg></div>
<div class="ci" style="left:336px;top:535px"><svg viewBox="0 0 24 24" fill="none" stroke="currentColor" stroke-width="2" stroke-linecap="round" stroke-linejoin="round"><path d="M8 12.300l2.700 2.700L16.300 9.400"/><rect x="3" y="3" width="18" height="18" rx="3.500"/></svg></div>
<div class="ci" style="left:414px;top:533px"><svg viewBox="0 0 24 24" fill="none" stroke="currentColor" stroke-width="2" stroke-linecap="round" stroke-linejoin="round"><rect x="3" y="4" width="18" height="18" rx="3.500"/><path d="M3 10h18M8 2v4M16 2v4M12 13v6M9 16h6"/></svg></div>
<div class="bdg" style="left:201px;top:520px">2</div>
<div class="bdg" style="left:279px;top:520px">1</div>
<div class="pb" style="left:24px;top:610px"><i class="g" style="left:0.0px"></i><i class="" style="left:163.7px"></i><i class="" style="left:327.4px"></i><i class="" style="left:491.1px"></i><i class="" style="left:654.8px"></i></div>
</div>
<div class="card" style="top:1039px;height:655px">
<div class="t" style="left:25.5px;top:45.9px;font-size:45px;color:#000;font-weight:400;letter-spacing:-0.06px;">Evergreen IT Services - New Inqu...</div>
<div class="av" style="left:764px;top:23px"><svg viewBox="0 0 24 24" fill="none" stroke="currentColor" stroke-width="2" stroke-linecap="round" stroke-linejoin="round"><circle cx="10" cy="7.500" r="4"/><path d="M3 21v-1.500a5 5 0 0 1 5-5h3.500M16.500 16l4.500 4.500M21 16l-4.500 4.500"/></svg></div>
<div class="t" style="left:27px;top:171.0px;font-size:36px;color:#5f717d;font-weight:700;letter-spacing:0.06px;">Business Name:</div>
<div class="t" style="left:353px;top:171.0px;font-size:36px;color:#5a6b78;font-weight:400;letter-spacing:0.8px;">Evergreen IT Services</div>
<div class="t" style="left:27px;top:261.0px;font-size:36px;color:#5f717d;font-weight:700;letter-spacing:0.44px;">Opportunity S...</div>
<div class="t" style="left:353px;top:261.0px;font-size:36px;color:#5a6b78;font-weight:400;letter-spacing:0.8px;">Phone Inquiry</div>
<div class="t" style="left:27px;top:351.0px;font-size:36px;color:#5f717d;font-weight:700;letter-spacing:0.64px;">Opportunity V...</div>
<div class="t" style="left:353px;top:351.0px;font-size:36px;color:#5a6b78;font-weight:400;letter-spacing:0.8px;">$1<span class="ns"> </span>200,00</div>
<div class="t" style="left:27px;top:441.0px;font-size:36px;color:#5f717d;font-weight:700;letter-spacing:0.31px;">Expected Clos...</div>
<div class="t" style="left:353px;top:441.0px;font-size:36px;color:#5a6b78;font-weight:400;letter-spacing:0.8px;">May 8, 2026</div>
<div class="ci" style="left:24px;top:535px"><svg viewBox="0 0 24 24" fill="none" stroke="currentColor" stroke-width="2" stroke-linecap="round" stroke-linejoin="round"><path d="M14.050 6A5 5 0 0 1 18 9.950M14.050 2A9 9 0 0 1 22 9.940M10.230 13.860a14.600 14.600 0 0 1-2.850-4.010 1 1 0 0 1 .200-1.140l.300-.300c.830-.830.830-2 0-2.830L6.200 3.900a2 2 0 0 0-2.830 0l-.760.760c-.860.860-1.230 2.070-1 3.260.570 2.950 2.300 6.390 5.170 9.260s6.310 4.600 9.260 5.170c1.190.230 2.400-.140 3.260-1l.760-.760a2 2 0 0 0 0-2.830l-1.680-1.680a2 2 0 0 0-2.830 0l-.300.300a1 1 0 0 1-1.140.200 14.600 14.600 0 0 1-3.880-2.720z"/></svg></div>
<div class="ci" style="left:102px;top:535px"><svg viewBox="0 0 24 24" fill="none" stroke="currentColor" stroke-width="2" stroke-linecap="round" stroke-linejoin="round"><path d="M21 12a9 9 0 0 1-12.600 8.250L3 21l1-4.400A9 9 0 1 1 21 12z"/><path d="M7.500 12h.01M12 12h.01M16.500 12h.01" stroke-width="2.600"/></svg></div>
<div class="ci" style="left:180px;top:535px"><svg viewBox="0 0 24 24" fill="none" stroke="currentColor" stroke-width="2" stroke-linecap="round" stroke-linejoin="round"><path d="M8 8h.01" stroke-width="2.800"/><path d="M2 5.200v4.470c0 .490 0 .730.060.960.050.200.130.400.240.580.120.200.300.370.640.720l7.670 7.670c1.190 1.190 1.780 1.780 2.470 2 .600.200 1.250.200 1.850 0 .690-.220 1.280-.810 2.470-2l2.200-2.200c1.190-1.190 1.780-1.780 2-2.470.200-.600.200-1.250 0-1.850-.220-.690-.810-1.280-2-2.470l-7.670-7.670c-.350-.350-.520-.520-.720-.640a2 2 0 0 0-.580-.240C10.400 2 10.160 2 9.670 2H5.200c-1.120 0-1.680 0-2.110.220a2 2 0 0 0-.870.870C2 3.520 2 4.080 2 5.200z"/></svg></div>
<div class="ci" style="left:258px;top:535px"><svg viewBox="0 0 24 24" fill="none" stroke="currentColor" stroke-width="2" stroke-linecap="round" stroke-linejoin="round"><path d="M14 2.270V6.400c0 .560 0 .840.110 1.050.100.190.250.340.440.440.210.110.490.110 1.050.110h4.130M14 17H8M16 13H8M20 9.990V17.200c0 1.680 0 2.520-.330 3.160a3 3 0 0 1-1.310 1.310c-.640.330-1.480.330-3.160.330H8.800c-1.680 0-2.520 0-3.160-.330a3 3 0 0 1-1.310-1.310C4 19.720 4 18.880 4 17.200V6.800c0-1.680 0-2.520.330-3.160a3 3 0 0 1 1.310-1.310C6.280 2 7.120 2 8.800 2h3.210c.730 0 1.100 0 1.450.080.310.070.600.200.870.360.300.190.560.450 1.080.960l3.190 3.190c.520.520.780.780.960 1.080.170.270.290.560.360.870.080.350.080.710.080 1.450z"/></svg></div>
<div class="ci" style="left:336px;top:535px"><svg viewBox="0 0 24 24" fill="none" stroke="currentColor" stroke-width="2" stroke-linecap="round" stroke-linejoin="round"><path d="M8 12.300l2.700 2.700L16.300 9.400"/><rect x="3" y="3" width="18" height="18" rx="3.500"/></svg></div>
<div class="ci" style="left:414px;top:533px"><svg viewBox="0 0 24 24" fill="none" stroke="currentColor" stroke-width="2" stroke-linecap="round" stroke-linejoin="round"><rect x="3" y="4" width="18" height="18" rx="3.500"/><path d="M3 10h18M8 2v4M16 2v4M12 13v6M9 16h6"/></svg></div>
<div class="bdg" style="left:201px;top:520px">2</div>
<div class="bdg" style="left:279px;top:520px">1</div>
<div class="pb" style="left:24px;top:610px"><i class="g" style="left:0.0px"></i><i class="" style="left:163.7px"></i><i class="" style="left:327.4px"></i><i class="" style="left:491.1px"></i><i class="" style="left:654.8px"></i></div>
</div>
</div>
<div class="col" style="left:2835px">
<div class="ch" style="border-top-color:#0891b2"></div>
<div class="t" style="left:38.5px;top:53.9px;font-size:42px;color:#101828;font-weight:700;letter-spacing:0.24px;">June</div>
<div class="t" style="left:40px;top:121.0px;font-size:36px;color:#667085;font-weight:400;letter-spacing:1.22px;">4 Opportunities</div>
<div class="t" style="left:auto;right:118px;top:52.9px;font-size:42px;color:#16a34a;font-weight:700;letter-spacing:2.18px;">$0,00</div>
<div class="t" style="left:409px;top:119.0px;font-size:42px;color:#101828;font-weight:700;letter-spacing:1.50px;">+29% of $15<span class="ns"> </span>600...</div>
<div class="t" style="left:auto;right:118px;top:185.4px;font-size:42px;color:#101828;font-weight:700;letter-spacing:2.40px;">$4<span class="ns"> </span>520,00</div>
<div class="abs" style="left:825px;top:51px;width:42px;height:42px;color:#667085;"><svg viewBox="0 0 24 24" fill="none" stroke="currentColor" stroke-width="2" stroke-linecap="round" stroke-linejoin="round"><path d="M15 5l-7 7 7 7"/></svg></div>
<div class="card" style="top:360px;height:655px">
<div class="t" style="left:25.5px;top:45.9px;font-size:45px;color:#000;font-weight:400;letter-spacing:0.09px;">Clifton Insurance Group - Service...</div>
<div class="av" style="left:764px;top:23px"><svg viewBox="0 0 24 24" fill="none" stroke="currentColor" stroke-width="2" stroke-linecap="round" stroke-linejoin="round"><circle cx="10" cy="7.500" r="4"/><path d="M3 21v-1.500a5 5 0 0 1 5-5h3.500M16.500 16l4.500 4.500M21 16l-4.500 4.500"/></svg></div>
<div class="t" style="left:27px;top:171.0px;font-size:36px;color:#5f717d;font-weight:700;letter-spacing:0.06px;">Business Name:</div>
<div class="t" style="left:353px;top:171.0px;font-size:36px;color:#5a6b78;font-weight:400;letter-spacing:0.8px;">Clifton Insurance Group</div>
<div class="t" style="left:27px;top:261.0px;font-size:36px;color:#5f717d;font-weight:700;letter-spacing:0.44px;">Opportunity S...</div>
<div class="t" style="left:353px;top:261.0px;font-size:36px;color:#5a6b78;font-weight:400;letter-spacing:0.8px;">Facebook Ads</div>
<div class="t" style="left:27px;top:351.0px;font-size:36px;color:#5f717d;font-weight:700;letter-spacing:0.64px;">Opportunity V...</div>
<div class="t" style="left:353px;top:351.0px;font-size:36px;color:#5a6b78;font-weight:400;letter-spacing:0.8px;">$1<span class="ns"> </span>200,00</div>
<div class="t" style="left:27px;top:441.0px;font-size:36px;color:#5f717d;font-weight:700;letter-spacing:0.31px;">Expected Clos...</div>
<div class="t" style="left:353px;top:441.0px;font-size:36px;color:#5a6b78;font-weight:400;letter-spacing:0.8px;">Jun 6, 2026</div>
<div class="ci" style="left:24px;top:535px"><svg viewBox="0 0 24 24" fill="none" stroke="currentColor" stroke-width="2" stroke-linecap="round" stroke-linejoin="round"><path d="M14.050 6A5 5 0 0 1 18 9.950M14.050 2A9 9 0 0 1 22 9.940M10.230 13.860a14.600 14.600 0 0 1-2.850-4.010 1 1 0 0 1 .200-1.140l.300-.300c.830-.830.830-2 0-2.830L6.200 3.900a2 2 0 0 0-2.830 0l-.760.760c-.860.860-1.230 2.070-1 3.260.570 2.950 2.300 6.390 5.170 9.260s6.310 4.600 9.260 5.170c1.190.230 2.400-.140 3.260-1l.760-.760a2 2 0 0 0 0-2.830l-1.680-1.680a2 2 0 0 0-2.830 0l-.300.300a1 1 0 0 1-1.140.200 14.600 14.600 0 0 1-3.880-2.720z"/></svg></div>
<div class="ci" style="left:102px;top:535px"><svg viewBox="0 0 24 24" fill="none" stroke="currentColor" stroke-width="2" stroke-linecap="round" stroke-linejoin="round"><path d="M21 12a9 9 0 0 1-12.600 8.250L3 21l1-4.400A9 9 0 1 1 21 12z"/><path d="M7.500 12h.01M12 12h.01M16.500 12h.01" stroke-width="2.600"/></svg></div>
<div class="ci" style="left:180px;top:535px"><svg viewBox="0 0 24 24" fill="none" stroke="currentColor" stroke-width="2" stroke-linecap="round" stroke-linejoin="round"><path d="M8 8h.01" stroke-width="2.800"/><path d="M2 5.200v4.470c0 .490 0 .730.060.960.050.200.130.400.240.580.120.200.300.370.640.720l7.670 7.670c1.190 1.190 1.780 1.780 2.470 2 .600.200 1.250.200 1.850 0 .690-.220 1.280-.810 2.470-2l2.200-2.200c1.190-1.190 1.780-1.780 2-2.470.200-.600.200-1.250 0-1.850-.220-.690-.810-1.280-2-2.470l-7.670-7.670c-.350-.350-.520-.520-.720-.640a2 2 0 0 0-.580-.240C10.400 2 10.160 2 9.670 2H5.200c-1.120 0-1.680 0-2.110.220a2 2 0 0 0-.870.870C2 3.520 2 4.080 2 5.200z"/></svg></div>
<div class="ci" style="left:258px;top:535px"><svg viewBox="0 0 24 24" fill="none" stroke="currentColor" stroke-width="2" stroke-linecap="round" stroke-linejoin="round"><path d="M14 2.270V6.400c0 .560 0 .840.110 1.050.100.190.250.340.440.440.210.110.490.110 1.050.110h4.130M14 17H8M16 13H8M20 9.990V17.200c0 1.680 0 2.520-.330 3.160a3 3 0 0 1-1.310 1.310c-.640.330-1.480.330-3.160.330H8.800c-1.680 0-2.520 0-3.160-.330a3 3 0 0 1-1.310-1.310C4 19.720 4 18.880 4 17.200V6.800c0-1.680 0-2.520.330-3.160a3 3 0 0 1 1.310-1.310C6.280 2 7.120 2 8.800 2h3.210c.730 0 1.100 0 1.450.080.310.070.600.200.870.360.300.190.560.450 1.080.960l3.190 3.190c.520.520.780.780.960 1.080.170.270.290.560.360.870.080.350.080.710.080 1.450z"/></svg></div>
<div class="ci" style="left:336px;top:535px"><svg viewBox="0 0 24 24" fill="none" stroke="currentColor" stroke-width="2" stroke-linecap="round" stroke-linejoin="round"><path d="M8 12.300l2.700 2.700L16.300 9.400"/><rect x="3" y="3" width="18" height="18" rx="3.500"/></svg></div>
<div class="ci" style="left:414px;top:533px"><svg viewBox="0 0 24 24" fill="none" stroke="currentColor" stroke-width="2" stroke-linecap="round" stroke-linejoin="round"><rect x="3" y="4" width="18" height="18" rx="3.500"/><path d="M3 10h18M8 2v4M16 2v4M12 13v6M9 16h6"/></svg></div>
<div class="bdg" style="left:201px;top:520px">2</div>
<div class="bdg" style="left:279px;top:520px">1</div>
<div class="pb" style="left:24px;top:610px"><i class="g" style="left:0.0px"></i><i class="" style="left:163.7px"></i><i class="" style="left:327.4px"></i><i class="" style="left:491.1px"></i><i class="" style="left:654.8px"></i></div>
</div>
<div class="card" style="top:1039px;height:655px">
<div class="t" style="left:25.5px;top:45.9px;font-size:45px;color:#000;font-weight:400;letter-spacing:0.17px;">Riverfront Creative Agency - Prop...</div>
<div class="av" style="left:764px;top:23px"><svg viewBox="0 0 24 24" fill="none" stroke="currentColor" stroke-width="2" stroke-linecap="round" stroke-linejoin="round"><circle cx="10" cy="7.500" r="4"/><path d="M3 21v-1.500a5 5 0 0 1 5-5h3.500M16.500 16l4.500 4.500M21 16l-4.500 4.500"/></svg></div>
<div class="t" style="left:27px;top:171.0px;font-size:36px;color:#5f717d;font-weight:700;letter-spacing:0.06px;">Business Name:</div>
<div class="t" style="left:353px;top:171.0px;font-size:36px;color:#5a6b78;font-weight:400;letter-spacing:0.8px;">Riverfront Creative Agency</div>
<div class="t" style="left:27px;top:261.0px;font-size:36px;color:#5f717d;font-weight:700;letter-spacing:0.44px;">Opportunity S...</div>
<div class="t" style="left:353px;top:261.0px;font-size:36px;color:#5a6b78;font-weight:400;letter-spacing:0.8px;">Google Ads</div>
<div class="t" style="left:27px;top:351.0px;font-size:36px;color:#5f717d;font-weight:700;letter-spacing:0.64px;">Opportunity V...</div>
<div class="t" style="left:353px;top:351.0px;font-size:36px;color:#5a6b78;font-weight:400;letter-spacing:0.8px;">$900,00</div>
<div class="t" style="left:27px;top:441.0px;font-size:36px;color:#5f717d;font-weight:700;letter-spacing:0.31px;">Expected Clos...</div>
<div class="t" style="left:353px;top:441.0px;font-size:36px;color:#5a6b78;font-weight:400;letter-spacing:0.8px;">Jun 14, 2026</div>
<div class="ci" style="left:24px;top:535px"><svg viewBox="0 0 24 24" fill="none" stroke="currentColor" stroke-width="2" stroke-linecap="round" stroke-linejoin="round"><path d="M14.050 6A5 5 0 0 1 18 9.950M14.050 2A9 9 0 0 1 22 9.940M10.230 13.860a14.600 14.600 0 0 1-2.850-4.010 1 1 0 0 1 .200-1.140l.300-.300c.830-.830.830-2 0-2.830L6.200 3.900a2 2 0 0 0-2.830 0l-.760.760c-.860.860-1.230 2.070-1 3.260.570 2.950 2.300 6.390 5.170 9.260s6.310 4.600 9.260 5.170c1.190.230 2.400-.140 3.260-1l.760-.760a2 2 0 0 0 0-2.830l-1.680-1.680a2 2 0 0 0-2.830 0l-.300.300a1 1 0 0 1-1.140.200 14.600 14.600 0 0 1-3.880-2.720z"/></svg></div>
<div class="ci" style="left:102px;top:535px"><svg viewBox="0 0 24 24" fill="none" stroke="currentColor" stroke-width="2" stroke-linecap="round" stroke-linejoin="round"><path d="M21 12a9 9 0 0 1-12.600 8.250L3 21l1-4.400A9 9 0 1 1 21 12z"/><path d="M7.500 12h.01M12 12h.01M16.500 12h.01" stroke-width="2.600"/></svg></div>
<div class="ci" style="left:180px;top:535px"><svg viewBox="0 0 24 24" fill="none" stroke="currentColor" stroke-width="2" stroke-linecap="round" stroke-linejoin="round"><path d="M8 8h.01" stroke-width="2.800"/><path d="M2 5.200v4.470c0 .490 0 .730.060.960.050.200.130.400.240.580.120.200.300.370.640.720l7.670 7.670c1.190 1.190 1.780 1.780 2.470 2 .600.200 1.250.200 1.850 0 .690-.220 1.280-.810 2.470-2l2.200-2.200c1.190-1.190 1.780-1.780 2-2.470.200-.600.200-1.250 0-1.850-.220-.690-.810-1.280-2-2.470l-7.670-7.670c-.350-.350-.520-.520-.720-.640a2 2 0 0 0-.580-.240C10.400 2 10.160 2 9.670 2H5.200c-1.120 0-1.680 0-2.110.220a2 2 0 0 0-.870.870C2 3.520 2 4.080 2 5.200z"/></svg></div>
<div class="ci" style="left:258px;top:535px"><svg viewBox="0 0 24 24" fill="none" stroke="currentColor" stroke-width="2" stroke-linecap="round" stroke-linejoin="round"><path d="M14 2.270V6.400c0 .560 0 .840.110 1.050.100.190.250.340.440.440.210.110.490.110 1.050.110h4.130M14 17H8M16 13H8M20 9.990V17.200c0 1.680 0 2.520-.330 3.160a3 3 0 0 1-1.310 1.310c-.640.330-1.480.330-3.160.330H8.800c-1.680 0-2.520 0-3.160-.330a3 3 0 0 1-1.310-1.310C4 19.720 4 18.880 4 17.200V6.800c0-1.680 0-2.520.330-3.160a3 3 0 0 1 1.310-1.310C6.280 2 7.120 2 8.800 2h3.210c.730 0 1.100 0 1.450.080.310.070.600.200.870.360.300.190.560.450 1.080.960l3.190 3.190c.520.520.780.780.960 1.080.170.270.290.560.360.870.080.350.080.710.080 1.450z"/></svg></div>
<div class="ci" style="left:336px;top:535px"><svg viewBox="0 0 24 24" fill="none" stroke="currentColor" stroke-width="2" stroke-linecap="round" stroke-linejoin="round"><path d="M8 12.300l2.700 2.700L16.300 9.400"/><rect x="3" y="3" width="18" height="18" rx="3.500"/></svg></div>
<div class="ci" style="left:414px;top:533px"><svg viewBox="0 0 24 24" fill="none" stroke="currentColor" stroke-width="2" stroke-linecap="round" stroke-linejoin="round"><rect x="3" y="4" width="18" height="18" rx="3.500"/><path d="M3 10h18M8 2v4M16 2v4M12 13v6M9 16h6"/></svg></div>
<div class="bdg" style="left:201px;top:520px">2</div>
<div class="bdg" style="left:279px;top:520px">1</div>
<div class="pb" style="left:24px;top:610px"><i class="g" style="left:0.0px"></i><i class="" style="left:163.7px"></i><i class="" style="left:327.4px"></i><i class="" style="left:491.1px"></i><i class="" style="left:654.8px"></i></div>
</div>
<div class="card" style="top:1718px;height:655px">
<div class="t" style="left:25.5px;top:45.9px;font-size:45px;color:#000;font-weight:400;letter-spacing:-0.07px;">Hudson Home Services - Pilot Pr...</div>
<div class="av" style="left:764px;top:23px"><svg viewBox="0 0 24 24" fill="none" stroke="currentColor" stroke-width="2" stroke-linecap="round" stroke-linejoin="round"><circle cx="10" cy="7.500" r="4"/><path d="M3 21v-1.500a5 5 0 0 1 5-5h3.500M16.500 16l4.500 4.500M21 16l-4.500 4.500"/></svg></div>
<div class="t" style="left:27px;top:171.0px;font-size:36px;color:#5f717d;font-weight:700;letter-spacing:0.06px;">Business Name:</div>
<div class="t" style="left:353px;top:171.0px;font-size:36px;color:#5a6b78;font-weight:400;letter-spacing:0.8px;">Hudson Home Services</div>
<div class="t" style="left:27px;top:261.0px;font-size:36px;color:#5f717d;font-weight:700;letter-spacing:0.44px;">Opportunity S...</div>
<div class="t" style="left:353px;top:261.0px;font-size:36px;color:#5a6b78;font-weight:400;letter-spacing:0.8px;">Facebook Ads</div>
<div class="t" style="left:27px;top:351.0px;font-size:36px;color:#5f717d;font-weight:700;letter-spacing:0.64px;">Opportunity V...</div>
<div class="t" style="left:353px;top:351.0px;font-size:36px;color:#5a6b78;font-weight:400;letter-spacing:0.8px;">$10<span class="ns"> </span>000,00</div>
<div class="t" style="left:27px;top:441.0px;font-size:36px;color:#5f717d;font-weight:700;letter-spacing:0.31px;">Expected Clos...</div>
<div class="t" style="left:353px;top:441.0px;font-size:36px;color:#5a6b78;font-weight:400;letter-spacing:0.8px;">Jun 11, 2026</div>
<div class="ci" style="left:24px;top:535px"><svg viewBox="0 0 24 24" fill="none" stroke="currentColor" stroke-width="2" stroke-linecap="round" stroke-linejoin="round"><path d="M14.050 6A5 5 0 0 1 18 9.950M14.050 2A9 9 0 0 1 22 9.940M10.230 13.860a14.600 14.600 0 0 1-2.850-4.010 1 1 0 0 1 .200-1.140l.300-.300c.830-.830.830-2 0-2.830L6.200 3.900a2 2 0 0 0-2.830 0l-.760.760c-.860.860-1.230 2.070-1 3.260.570 2.950 2.300 6.390 5.170 9.260s6.310 4.600 9.260 5.170c1.190.230 2.400-.140 3.260-1l.760-.760a2 2 0 0 0 0-2.830l-1.680-1.680a2 2 0 0 0-2.830 0l-.300.300a1 1 0 0 1-1.140.200 14.600 14.600 0 0 1-3.880-2.720z"/></svg></div>
<div class="ci" style="left:102px;top:535px"><svg viewBox="0 0 24 24" fill="none" stroke="currentColor" stroke-width="2" stroke-linecap="round" stroke-linejoin="round"><path d="M21 12a9 9 0 0 1-12.600 8.250L3 21l1-4.400A9 9 0 1 1 21 12z"/><path d="M7.500 12h.01M12 12h.01M16.500 12h.01" stroke-width="2.600"/></svg></div>
<div class="ci" style="left:180px;top:535px"><svg viewBox="0 0 24 24" fill="none" stroke="currentColor" stroke-width="2" stroke-linecap="round" stroke-linejoin="round"><path d="M8 8h.01" stroke-width="2.800"/><path d="M2 5.200v4.470c0 .490 0 .730.060.960.050.200.130.400.240.580.120.200.300.370.640.720l7.670 7.670c1.190 1.190 1.780 1.780 2.470 2 .600.200 1.250.200 1.850 0 .690-.220 1.280-.810 2.470-2l2.200-2.200c1.190-1.190 1.780-1.780 2-2.470.200-.600.200-1.250 0-1.850-.220-.690-.810-1.280-2-2.470l-7.670-7.670c-.350-.350-.520-.520-.720-.640a2 2 0 0 0-.580-.240C10.400 2 10.160 2 9.670 2H5.200c-1.120 0-1.680 0-2.110.220a2 2 0 0 0-.870.870C2 3.520 2 4.080 2 5.200z"/></svg></div>
<div class="ci" style="left:258px;top:535px"><svg viewBox="0 0 24 24" fill="none" stroke="currentColor" stroke-width="2" stroke-linecap="round" stroke-linejoin="round"><path d="M14 2.270V6.400c0 .560 0 .840.110 1.050.100.190.250.340.440.440.210.110.490.110 1.050.110h4.130M14 17H8M16 13H8M20 9.990V17.200c0 1.680 0 2.520-.330 3.160a3 3 0 0 1-1.310 1.310c-.640.330-1.480.330-3.160.330H8.800c-1.680 0-2.520 0-3.160-.330a3 3 0 0 1-1.310-1.310C4 19.720 4 18.880 4 17.200V6.800c0-1.680 0-2.520.330-3.160a3 3 0 0 1 1.310-1.310C6.280 2 7.120 2 8.800 2h3.210c.730 0 1.100 0 1.450.080.310.070.600.200.870.360.300.190.560.450 1.080.960l3.190 3.190c.520.520.780.780.960 1.080.170.270.290.560.360.870.080.350.080.710.080 1.450z"/></svg></div>
<div class="ci" style="left:336px;top:535px"><svg viewBox="0 0 24 24" fill="none" stroke="currentColor" stroke-width="2" stroke-linecap="round" stroke-linejoin="round"><path d="M8 12.300l2.700 2.700L16.300 9.400"/><rect x="3" y="3" width="18" height="18" rx="3.500"/></svg></div>
<div class="ci" style="left:414px;top:533px"><svg viewBox="0 0 24 24" fill="none" stroke="currentColor" stroke-width="2" stroke-linecap="round" stroke-linejoin="round"><rect x="3" y="4" width="18" height="18" rx="3.500"/><path d="M3 10h18M8 2v4M16 2v4M12 13v6M9 16h6"/></svg></div>
<div class="bdg" style="left:201px;top:520px">2</div>
<div class="bdg" style="left:279px;top:520px">1</div>
<div class="pb" style="left:24px;top:610px"><i class="g" style="left:0.0px"></i><i class="" style="left:163.7px"></i><i class="" style="left:327.4px"></i><i class="" style="left:491.1px"></i><i class="" style="left:654.8px"></i></div>
</div>
</div>
<div class="col" style="left:3780px">
<div class="ch" style="border-top-color:#2dd4bf"></div>
<div class="t" style="left:38.5px;top:53.9px;font-size:42px;color:#101828;font-weight:700;letter-spacing:0.5px;">July</div>
<div class="t" style="left:40px;top:121.0px;font-size:36px;color:#667085;font-weight:400;letter-spacing:0.9px;">0 Opportunities</div>
<div class="t" style="left:auto;right:118px;top:52.9px;font-size:42px;color:#16a34a;font-weight:700;letter-spacing:1.5px;">$0,00</div>
<div class="t" style="left:409px;top:119.0px;font-size:42px;color:#101828;font-weight:700;letter-spacing:1.45px;">+0% of $0,00</div>
<div class="t" style="left:auto;right:118px;top:185.4px;font-size:42px;color:#101828;font-weight:700;letter-spacing:1.5px;">$0,00</div>
<div class="abs" style="left:825px;top:51px;width:42px;height:42px;color:#667085;"><svg viewBox="0 0 24 24" fill="none" stroke="currentColor" stroke-width="2" stroke-linecap="round" stroke-linejoin="round"><path d="M15 5l-7 7 7 7"/></svg></div>
</div>
</div>
<div class="sbar"></div>
</div></div>
</body></html>
